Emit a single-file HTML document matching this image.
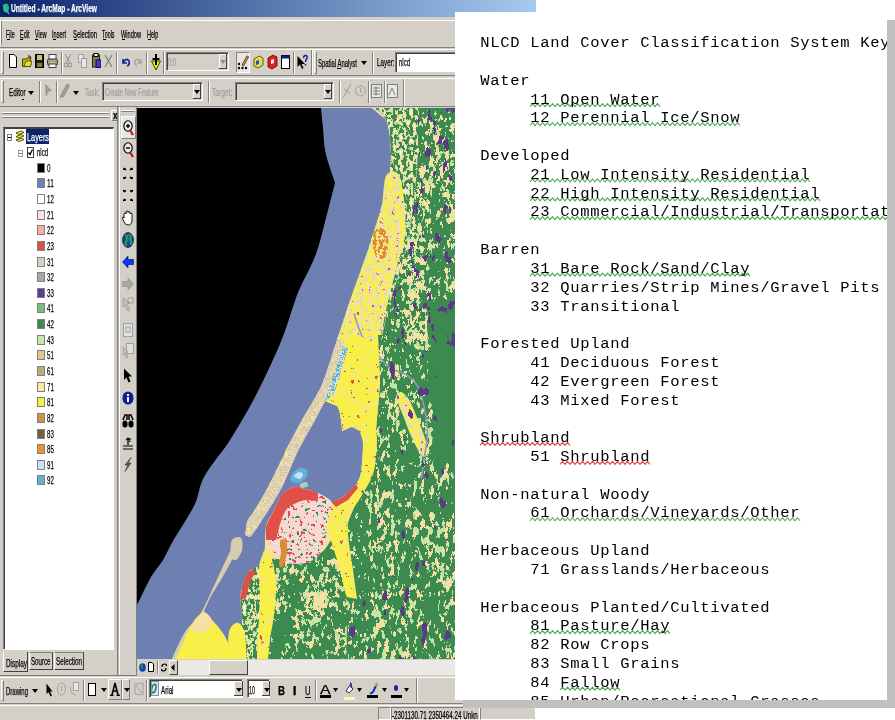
<!DOCTYPE html>
<html><head><meta charset="utf-8">
<style>
*{margin:0;padding:0;box-sizing:border-box}
html,body{width:895px;height:720px;overflow:hidden;background:#fff;position:relative;font-family:"Liberation Sans",sans-serif}
.a{position:absolute}
.t{white-space:nowrap;transform-origin:0 0;-webkit-text-stroke:0.25px currentColor}
#win{left:0;top:0;width:536px;height:720px;background:#d4d0c8;overflow:hidden}
#map{left:137px;top:108px;width:320px;height:551px;background:#000;overflow:hidden}
#doc{left:455px;top:12px;width:432px;height:688px;background:#fff;overflow:hidden;will-change:transform}
#shr{left:887px;top:20px;width:8px;height:688px;background:#c0c0c0}
#shb{left:463px;top:700px;width:432px;height:8px;background:#c0c0c0}
pre{font-family:"Liberation Mono",monospace;font-size:15.5px;letter-spacing:0.7px;line-height:18.82px;color:#000;position:absolute;left:25.3px;top:22.15px;white-space:pre}
</style></head><body>
<div id="win" class="a">
<div class="a" style="left:0px;top:0px;width:536px;height:17px;background:linear-gradient(to right,#0a246a 0%,#a6caf0 100%)"></div>
<svg class="a" style="left:1px;top:2px" width="10" height="14" viewBox="0 0 10 14" preserveAspectRatio="none"><ellipse cx="5" cy="7" rx="4.6" ry="6.2" fill="#0a1a50"/><ellipse cx="5" cy="6" rx="3" ry="4.5" fill="#20c060"/><path d="M2 3 L8 12" stroke="#40a0ff" stroke-width="1.5"/></svg>
<div class="a t" style="left:10.60px;top:3.29px;font-size:11px;line-height:11px;color:#fff;font-weight:bold;transform:scaleX(0.600);">Untitled - ArcMap - ArcView</div>
<div class="a" style="left:0px;top:20px;width:536px;height:1px;background:#fff"></div>
<div class="a" style="left:0px;top:21px;width:1px;height:24px;background:#ffffff"></div>
<div class="a" style="left:1px;top:21px;width:1px;height:24px;background:#808080"></div>
<div class="a t" style="left:6.30px;top:29.19px;font-size:11px;line-height:11px;color:#000;transform:scaleX(0.491);">File</div>
<div class="a" style="left:6.5px;top:39px;width:3px;height:1px;background:#000"></div>
<div class="a t" style="left:19.70px;top:29.19px;font-size:11px;line-height:11px;color:#000;transform:scaleX(0.501);">Edit</div>
<div class="a" style="left:19.5px;top:39px;width:3px;height:1px;background:#000"></div>
<div class="a t" style="left:34.90px;top:29.19px;font-size:11px;line-height:11px;color:#000;transform:scaleX(0.486);">View</div>
<div class="a" style="left:34.5px;top:39px;width:3px;height:1px;background:#000"></div>
<div class="a t" style="left:52.40px;top:29.19px;font-size:11px;line-height:11px;color:#000;transform:scaleX(0.509);">Insert</div>
<div class="a" style="left:52.5px;top:39px;width:3px;height:1px;background:#000"></div>
<div class="a t" style="left:73.30px;top:29.19px;font-size:11px;line-height:11px;color:#000;transform:scaleX(0.530);">Selection</div>
<div class="a" style="left:73.5px;top:39px;width:3px;height:1px;background:#000"></div>
<div class="a t" style="left:102.30px;top:29.19px;font-size:11px;line-height:11px;color:#000;transform:scaleX(0.487);">Tools</div>
<div class="a" style="left:102.5px;top:39px;width:3px;height:1px;background:#000"></div>
<div class="a t" style="left:121.10px;top:29.19px;font-size:11px;line-height:11px;color:#000;transform:scaleX(0.511);">Window</div>
<div class="a" style="left:121.5px;top:39px;width:3px;height:1px;background:#000"></div>
<div class="a t" style="left:147.00px;top:29.19px;font-size:11px;line-height:11px;color:#000;transform:scaleX(0.499);">Help</div>
<div class="a" style="left:147.5px;top:39px;width:3px;height:1px;background:#000"></div>
<div class="a" style="left:0px;top:47px;width:536px;height:1px;background:#808080"></div>
<div class="a" style="left:0px;top:49px;width:536px;height:1px;background:#ffffff"></div>
<div class="a" style="left:1px;top:51px;width:3px;height:23px;border-left:1px solid #ffffff;border-top:1px solid #ffffff;border-right:1px solid #808080;border-bottom:1px solid #808080"></div>
<svg class="a" style="left:9px;top:54px" width="8" height="14" viewBox="0 0 8 14" preserveAspectRatio="none"><path d="M0.5 0.5 H5 L7.5 3 V13.5 H0.5 Z" fill="#fff" stroke="#000"/></svg>
<svg class="a" style="left:22px;top:55px" width="10" height="12" viewBox="0 0 10 12" preserveAspectRatio="none"><path d="M0.5 4 H4 L5 3 H8.5 V11.5 H0.5 Z" fill="#c8b800" stroke="#404000"/><path d="M2 11.5 L4 6 H10 L8.5 11.5 Z" fill="#e8e040" stroke="#404000" stroke-width=".8"/><path d="M6 1 Q8 0 9 3" stroke="#000" fill="none"/></svg>
<svg class="a" style="left:35px;top:54px" width="9" height="14" viewBox="0 0 9 14" preserveAspectRatio="none"><rect x="0.5" y="0.5" width="8" height="13" fill="#202000" stroke="#000"/><rect x="2" y="1" width="5" height="5" fill="#c8c080"/><rect x="2" y="9" width="5" height="4" fill="#808040"/></svg>
<svg class="a" style="left:47px;top:54px" width="11" height="14" viewBox="0 0 11 14" preserveAspectRatio="none"><rect x="2" y="0.5" width="7" height="5" fill="#fff" stroke="#444"/><rect x="0.5" y="5" width="10" height="6" rx="1.5" fill="#a0a0a0" stroke="#333"/><rect x="2" y="10" width="7" height="3.5" fill="#fff" stroke="#444"/><rect x="3" y="8" width="5" height="1" fill="#e0d020"/></svg>
<div class="a" style="left:61px;top:52px;width:1px;height:22px;background:#808080"></div>
<div class="a" style="left:62px;top:52px;width:1px;height:22px;background:#ffffff"></div>
<svg class="a" style="left:64px;top:54px" width="8" height="14" viewBox="0 0 8 14" preserveAspectRatio="none"><path d="M1 0 L6 9 M7 0 L2 9" stroke="#909090" stroke-width="1"/><circle cx="2" cy="11" r="2" fill="none" stroke="#909090"/><circle cx="6" cy="11" r="2" fill="none" stroke="#909090"/></svg>
<svg class="a" style="left:78px;top:54px" width="9" height="14" viewBox="0 0 9 14" preserveAspectRatio="none"><rect x="0.5" y="0.5" width="5" height="8" fill="#e8e8e8" stroke="#a0a0a0"/><rect x="3.5" y="4.5" width="5" height="9" fill="#e8e8e8" stroke="#a0a0a0"/></svg>
<svg class="a" style="left:92px;top:53px" width="9" height="15" viewBox="0 0 9 15" preserveAspectRatio="none"><rect x="0.5" y="2" width="7" height="12" fill="#808040" stroke="#202000"/><rect x="2" y="0.5" width="4" height="3" fill="#fff" stroke="#000"/><rect x="4" y="7" width="5" height="7.5" fill="#4040c0" stroke="#000080"/></svg>
<svg class="a" style="left:104px;top:54px" width="9" height="14" viewBox="0 0 9 14" preserveAspectRatio="none"><path d="M1 1 L8 13 M8 1 L1 13" stroke="#808080" stroke-width="1.2"/></svg>
<div class="a" style="left:116px;top:52px;width:1px;height:22px;background:#808080"></div>
<div class="a" style="left:117px;top:52px;width:1px;height:22px;background:#ffffff"></div>
<svg class="a" style="left:121px;top:56px" width="9" height="11" viewBox="0 0 9 11" preserveAspectRatio="none"><path d="M2 3 L2 7 L6 7" fill="none" stroke="#1020a0" stroke-width="1.6"/><path d="M2 7 Q5 1 8 5 Q9 9 6 10" fill="none" stroke="#1020a0" stroke-width="1.6"/></svg>
<svg class="a" style="left:134px;top:56px" width="9" height="11" viewBox="0 0 9 11" preserveAspectRatio="none"><path d="M7 3 L7 7 L3 7" fill="none" stroke="#a0a0a0" stroke-width="1.4"/><path d="M7 7 Q4 1 1 5 Q0 9 3 10" fill="none" stroke="#a0a0a0" stroke-width="1.4"/></svg>
<div class="a" style="left:146px;top:52px;width:1px;height:22px;background:#808080"></div>
<div class="a" style="left:147px;top:52px;width:1px;height:22px;background:#ffffff"></div>
<svg class="a" style="left:151px;top:54px" width="10" height="17" viewBox="0 0 10 17" preserveAspectRatio="none"><path d="M0.5 7 H9.5 L5 16 Z" fill="#f0f000" stroke="#404000"/><path d="M5 0 V11 M1.5 5 H8.5" stroke="#000" stroke-width="2"/></svg>
<div class="a" style="left:163px;top:52px;width:1px;height:22px;background:#808080"></div>
<div class="a" style="left:164px;top:52px;width:1px;height:22px;background:#ffffff"></div>
<div class="a" style="left:166px;top:52px;width:63px;height:19px;background:#d4d0c8;border-top:1px solid #808080;border-left:1px solid #808080;border-right:1px solid #ffffff;border-bottom:1px solid #ffffff;box-shadow:inset 1px 1px 0 #404040,inset -1px -1px 0 #d4d0c8"></div>
<div class="a" style="left:219px;top:54px;width:8px;height:15px;background:#d4d0c8;border-top:1px solid #ffffff;border-left:1px solid #ffffff;border-right:1px solid #808080;border-bottom:1px solid #808080"></div>
<div class="a" style="left:219px;top:54px;width:8px;height:15px;box-shadow:inset -1px -1px 0 #404040"></div>
<svg class="a" style="left:220.0px;top:59.5px" width="6" height="4" viewBox="0 0 6 4" preserveAspectRatio="none"><path d="M0 0 L6 0 L3.0 4 Z" fill="#909090"/></svg>
<div class="a t" style="left:168.00px;top:56.69px;font-size:11px;line-height:11px;color:#a0a0a0;transform:scaleX(0.522);">0:0</div>
<div class="a" style="left:236px;top:52px;width:14px;height:21px;background:#e8e6e2;border-top:1px solid #808080;border-left:1px solid #808080;border-right:1px solid #ffffff;border-bottom:1px solid #ffffff"></div>
<svg class="a" style="left:237px;top:55px" width="12" height="15" viewBox="0 0 12 15" preserveAspectRatio="none"><path d="M5 10 L10 1 L11.5 2 L6.5 11 Z" fill="#e0c040" stroke="#000" stroke-width=".7"/><path d="M10 1 L11.5 2" stroke="#e02020" stroke-width="1.5"/><circle cx="2" cy="13" r="1.2" fill="#000"/><circle cx="5.5" cy="13" r="1.2" fill="#000"/><circle cx="9" cy="13" r="1.2" fill="#000"/><circle cx="2" cy="9" r="1.2" fill="#000"/></svg>
<svg class="a" style="left:253px;top:54px" width="11" height="16" viewBox="0 0 11 16" preserveAspectRatio="none"><path d="M1 5 L6 2 L10 4 L10 11 L5 14 L1 12 Z" fill="#e8e040" stroke="#404000" stroke-width=".8"/><path d="M3 7 L6 6 L6 10 L3 11 Z" fill="#2050c0"/></svg>
<svg class="a" style="left:267px;top:54px" width="11" height="16" viewBox="0 0 11 16" preserveAspectRatio="none"><path d="M1 4 L6 1 L10 3 L10 12 L5 15 L1 13 Z" fill="#e02020" stroke="#600000" stroke-width=".8"/><path d="M4 6 L7 5 L7 9 L4 10 Z" fill="#fff"/></svg>
<svg class="a" style="left:281px;top:55px" width="9" height="14" viewBox="0 0 9 14" preserveAspectRatio="none"><rect x="0.5" y="0.5" width="8" height="13" fill="#fff" stroke="#000"/><rect x="0.5" y="0.5" width="8" height="3" fill="#102080"/></svg>
<div class="a" style="left:293px;top:52px;width:1px;height:22px;background:#808080"></div>
<div class="a" style="left:294px;top:52px;width:1px;height:22px;background:#ffffff"></div>
<svg class="a" style="left:297px;top:54px" width="11" height="16" viewBox="0 0 11 16" preserveAspectRatio="none"><path d="M0.5 2 V13 L3 10.5 L5 15 L6.5 14 L4.5 10 H8 Z" fill="#000"/><path d="M6.5 4 Q7 1 9 1.5 Q11 2.5 9.5 5 Q8.5 6 8.5 8 M8.5 10 V11.5" fill="none" stroke="#1020a0" stroke-width="1.5"/></svg>
<div class="a" style="left:311px;top:50px;width:1px;height:26px;background:#808080"></div>
<div class="a" style="left:312px;top:50px;width:1px;height:26px;background:#ffffff"></div>
<div class="a" style="left:314px;top:51px;width:3px;height:23px;border-left:1px solid #ffffff;border-top:1px solid #ffffff;border-right:1px solid #808080;border-bottom:1px solid #808080"></div>
<div class="a t" style="left:318.00px;top:57.69px;font-size:11px;line-height:11px;color:#000;transform:scaleX(0.540);">Spatial Analyst</div>
<div class="a" style="left:337px;top:68px;width:4px;height:1px;background:#000"></div>
<svg class="a" style="left:360.8px;top:61px" width="6" height="4" viewBox="0 0 6 4" preserveAspectRatio="none"><path d="M0 0 L6 0 L3.0 4 Z" fill="#000"/></svg>
<div class="a" style="left:372px;top:52px;width:1px;height:22px;background:#808080"></div>
<div class="a" style="left:373px;top:52px;width:1px;height:22px;background:#ffffff"></div>
<div class="a t" style="left:376.90px;top:56.69px;font-size:11px;line-height:11px;color:#000;transform:scaleX(0.572);">Layer:</div>
<div class="a" style="left:395px;top:52px;width:62px;height:20px;background:#fff;border-top:1px solid #808080;border-left:1px solid #808080;box-shadow:inset 1px 1px 0 #404040"></div>
<div class="a t" style="left:399.00px;top:56.69px;font-size:11px;line-height:11px;color:#000;transform:scaleX(0.545);">nlcd</div>
<div class="a" style="left:0px;top:75px;width:536px;height:1px;background:#808080"></div>
<div class="a" style="left:0px;top:78px;width:536px;height:1px;background:#ffffff"></div>
<div class="a" style="left:1px;top:80px;width:3px;height:23px;border-left:1px solid #ffffff;border-top:1px solid #ffffff;border-right:1px solid #808080;border-bottom:1px solid #808080"></div>
<div class="a t" style="left:8.70px;top:86.99px;font-size:11px;line-height:11px;color:#000;transform:scaleX(0.574);">Editor</div>
<div class="a" style="left:22px;top:99px;width:2px;height:1px;background:#000"></div>
<svg class="a" style="left:28px;top:90.5px" width="6" height="4" viewBox="0 0 6 4" preserveAspectRatio="none"><path d="M0 0 L6 0 L3.0 4 Z" fill="#000"/></svg>
<div class="a" style="left:39px;top:81px;width:1px;height:22px;background:#808080"></div>
<div class="a" style="left:40px;top:81px;width:1px;height:22px;background:#ffffff"></div>
<svg class="a" style="left:45px;top:84px" width="7" height="13" viewBox="0 0 7 13" preserveAspectRatio="none"><path d="M0.5 0.5 L6.5 7 L3.5 7 L1 12 Z" fill="#a0a0a0" stroke="#808080" stroke-width=".5"/></svg>
<div class="a" style="left:56px;top:81px;width:1px;height:22px;background:#808080"></div>
<div class="a" style="left:57px;top:81px;width:1px;height:22px;background:#ffffff"></div>
<svg class="a" style="left:60px;top:83px" width="10" height="15" viewBox="0 0 10 15" preserveAspectRatio="none"><path d="M1 12 L7 1 L9.5 2.5 L3.5 13.5 L0.5 14.5 Z" fill="#a0a0a0" stroke="#707070" stroke-width=".6"/></svg>
<svg class="a" style="left:73px;top:90.5px" width="6" height="4" viewBox="0 0 6 4" preserveAspectRatio="none"><path d="M0 0 L6 0 L3.0 4 Z" fill="#000"/></svg>
<div class="a t" style="left:85.00px;top:86.99px;font-size:11px;line-height:11px;color:#a0a0a0;transform:scaleX(0.564);">Task:</div>
<div class="a" style="left:102px;top:82px;width:101px;height:19px;background:#d4d0c8;border-top:1px solid #808080;border-left:1px solid #808080;border-right:1px solid #ffffff;border-bottom:1px solid #ffffff;box-shadow:inset 1px 1px 0 #404040,inset -1px -1px 0 #d4d0c8"></div>
<div class="a" style="left:193px;top:84px;width:8px;height:15px;background:#d4d0c8;border-top:1px solid #ffffff;border-left:1px solid #ffffff;border-right:1px solid #808080;border-bottom:1px solid #808080"></div>
<div class="a" style="left:193px;top:84px;width:8px;height:15px;box-shadow:inset -1px -1px 0 #404040"></div>
<svg class="a" style="left:194.0px;top:89.5px" width="6" height="4" viewBox="0 0 6 4" preserveAspectRatio="none"><path d="M0 0 L6 0 L3.0 4 Z" fill="#000"/></svg>
<div class="a t" style="left:104.90px;top:86.99px;font-size:11px;line-height:11px;color:#a0a0a0;transform:scaleX(0.540);">Create New Feature</div>
<div class="a" style="left:208px;top:81px;width:1px;height:22px;background:#808080"></div>
<div class="a" style="left:209px;top:81px;width:1px;height:22px;background:#ffffff"></div>
<div class="a t" style="left:212.40px;top:86.99px;font-size:11px;line-height:11px;color:#a0a0a0;transform:scaleX(0.609);">Target:</div>
<div class="a" style="left:235px;top:82px;width:99px;height:19px;background:#d4d0c8;border-top:1px solid #808080;border-left:1px solid #808080;border-right:1px solid #ffffff;border-bottom:1px solid #ffffff;box-shadow:inset 1px 1px 0 #404040,inset -1px -1px 0 #d4d0c8"></div>
<div class="a" style="left:324px;top:84px;width:8px;height:15px;background:#d4d0c8;border-top:1px solid #ffffff;border-left:1px solid #ffffff;border-right:1px solid #808080;border-bottom:1px solid #808080"></div>
<div class="a" style="left:324px;top:84px;width:8px;height:15px;box-shadow:inset -1px -1px 0 #404040"></div>
<svg class="a" style="left:325.0px;top:89.5px" width="6" height="4" viewBox="0 0 6 4" preserveAspectRatio="none"><path d="M0 0 L6 0 L3.0 4 Z" fill="#000"/></svg>
<div class="a" style="left:339px;top:81px;width:1px;height:22px;background:#808080"></div>
<div class="a" style="left:340px;top:81px;width:1px;height:22px;background:#ffffff"></div>
<svg class="a" style="left:342px;top:83px" width="10" height="16" viewBox="0 0 10 16" preserveAspectRatio="none"><path d="M9 1 L1 15 M2 6 L8 10" stroke="#a0a0a0" stroke-width="1"/></svg>
<svg class="a" style="left:355px;top:83px" width="11" height="16" viewBox="0 0 11 16" preserveAspectRatio="none"><circle cx="5.5" cy="8" r="5" fill="none" stroke="#a0a0a0"/><path d="M5.5 5 V9 L7 10" stroke="#a0a0a0" fill="none"/></svg>
<div class="a" style="left:368px;top:81px;width:1px;height:22px;background:#808080"></div>
<div class="a" style="left:369px;top:81px;width:1px;height:22px;background:#ffffff"></div>
<svg class="a" style="left:371px;top:84px" width="11" height="14" viewBox="0 0 11 14" preserveAspectRatio="none"><rect x="0.5" y="0.5" width="10" height="13" fill="#e8e8e8" stroke="#808080"/><path d="M2 4 H9 M2 7 H9 M2 10 H9 M5 2 V12" stroke="#808080"/></svg>
<div class="a" style="left:384px;top:81px;width:1px;height:22px;background:#808080"></div>
<div class="a" style="left:385px;top:81px;width:1px;height:22px;background:#ffffff"></div>
<svg class="a" style="left:387px;top:84px" width="11" height="14" viewBox="0 0 11 14" preserveAspectRatio="none"><rect x="0.5" y="0.5" width="10" height="13" fill="#e8e8e8" stroke="#808080"/><path d="M2 11 L5 4 L8 11" stroke="#808080" fill="none"/></svg>
<div class="a" style="left:403px;top:79px;width:1px;height:27px;background:#808080"></div>
<div class="a" style="left:404px;top:79px;width:1px;height:27px;background:#ffffff"></div>
<div class="a" style="left:0px;top:106px;width:536px;height:1px;background:#808080"></div>
<div id="map" class="a"><svg width="320" height="551" viewBox="137 108 320 551" style="position:absolute;left:0;top:0;display:block"><defs><filter id="fUR_lg" color-interpolation-filters="sRGB" x="137" y="108" width="320" height="<class '__main__.H'>" filterUnits="userSpaceOnUse"><feTurbulence type="fractalNoise" baseFrequency="0.24 0.14" numOctaves="4" seed="4" result="fUR_lgh0"/><feColorMatrix in="fUR_lgh0" type="matrix" values="1 0 0 0 0 1 0 0 0 0 1 0 0 0 0 0 0 0 0 1" result="fUR_lgh"/><feTurbulence type="fractalNoise" baseFrequency="0.035 0.025" numOctaves="2" seed="5" result="fUR_lgl0"/><feColorMatrix in="fUR_lgl0" type="matrix" values="1 0 0 0 0 1 0 0 0 0 1 0 0 0 0 0 0 0 0 1" result="fUR_lgl"/><feComposite in="fUR_lgh" in2="fUR_lgl" operator="arithmetic" k1="0" k2="0.700" k3="0.300" k4="0" result="fUR_lgg"/><feColorMatrix in="fUR_lgg" type="matrix" values="1 0 0 0 0 1 0 0 0 0 1 0 0 0 0 1 0 0 0 0" result="fUR_lgga"/><feComponentTransfer in="fUR_lgga"><feFuncR type="discrete" tableValues="0 0 0 0 0 0 0 0 0 0 0 0 0 0 0 0 0 0 0 0 0 0 0 0 0 0 0 0 0 0 0 0 0 0 0 0 0 0 0 0 0 0 0 0 0 0 0 0 0 0 0 0 0 0 0 0 0 0 0 0 0 0 0 0 0 0 0 0 0 0 0 0 0 0 0 0.784 0.784 0.784 0.784 0.784 0.784 0.784 0.784 0.784 0.784 0.784 0.784 0.784 0.784 0.784 0.784 0.784 0.784 0.784 0.784 0.784 0.784 0.784 0.784 0.784 0.784 0.784 0.784 0.784 0.784 0.784 0.784 0.784 0.784 0.784 0.784 0.784 0.784 0.784 0.784 0.784 0.784 0.784 0.784 0.784 0.784 0.784 0.784 0.784 0.784 0.784 0.784 0.784"/><feFuncG type="discrete" tableValues="0 0 0 0 0 0 0 0 0 0 0 0 0 0 0 0 0 0 0 0 0 0 0 0 0 0 0 0 0 0 0 0 0 0 0 0 0 0 0 0 0 0 0 0 0 0 0 0 0 0 0 0 0 0 0 0 0 0 0 0 0 0 0 0 0 0 0 0 0 0 0 0 0 0 0 0.894 0.894 0.894 0.894 0.894 0.894 0.894 0.894 0.894 0.894 0.894 0.894 0.894 0.894 0.894 0.894 0.894 0.894 0.894 0.894 0.894 0.894 0.894 0.894 0.894 0.894 0.894 0.894 0.894 0.894 0.894 0.894 0.894 0.894 0.894 0.894 0.894 0.894 0.894 0.894 0.894 0.894 0.894 0.894 0.894 0.894 0.894 0.894 0.894 0.894 0.894 0.894 0.894"/><feFuncB type="discrete" tableValues="0 0 0 0 0 0 0 0 0 0 0 0 0 0 0 0 0 0 0 0 0 0 0 0 0 0 0 0 0 0 0 0 0 0 0 0 0 0 0 0 0 0 0 0 0 0 0 0 0 0 0 0 0 0 0 0 0 0 0 0 0 0 0 0 0 0 0 0 0 0 0 0 0 0 0 0.643 0.643 0.643 0.643 0.643 0.643 0.643 0.643 0.643 0.643 0.643 0.643 0.643 0.643 0.643 0.643 0.643 0.643 0.643 0.643 0.643 0.643 0.643 0.643 0.643 0.643 0.643 0.643 0.643 0.643 0.643 0.643 0.643 0.643 0.643 0.643 0.643 0.643 0.643 0.643 0.643 0.643 0.643 0.643 0.643 0.643 0.643 0.643 0.643 0.643 0.643 0.643 0.643"/><feFuncA type="discrete" tableValues="0 0 0 0 0 0 0 0 0 0 0 0 0 0 0 0 0 0 0 0 0 0 0 0 0 0 0 0 0 0 0 0 0 0 0 0 0 0 0 0 0 0 0 0 0 0 0 0 0 0 0 0 0 0 0 0 0 0 0 0 0 0 0 0 0 0 0 0 0 0 0 0 0 0 0 1 1 1 1 1 1 1 1 1 1 1 1 1 1 1 1 1 1 1 1 1 1 1 1 1 1 1 1 1 1 1 1 1 1 1 1 1 1 1 1 1 1 1 1 1 1 1 1 1 1 1 1 1"/></feComponentTransfer></filter><filter id="fUR_bg" color-interpolation-filters="sRGB" x="137" y="108" width="320" height="<class '__main__.H'>" filterUnits="userSpaceOnUse"><feTurbulence type="fractalNoise" baseFrequency="0.2 0.12" numOctaves="4" seed="8" result="fUR_bgh0"/><feColorMatrix in="fUR_bgh0" type="matrix" values="1 0 0 0 0 1 0 0 0 0 1 0 0 0 0 0 0 0 0 1" result="fUR_bgh"/><feTurbulence type="fractalNoise" baseFrequency="0.035 0.025" numOctaves="2" seed="5" result="fUR_bgl0"/><feColorMatrix in="fUR_bgl0" type="matrix" values="1 0 0 0 0 1 0 0 0 0 1 0 0 0 0 0 0 0 0 1" result="fUR_bgl"/><feComposite in="fUR_bgh" in2="fUR_bgl" operator="arithmetic" k1="0" k2="0.700" k3="0.300" k4="0" result="fUR_bgg"/><feColorMatrix in="fUR_bgg" type="matrix" values="1 0 0 0 0 1 0 0 0 0 1 0 0 0 0 1 0 0 0 0" result="fUR_bgga"/><feComponentTransfer in="fUR_bgga"><feFuncR type="discrete" tableValues="0 0 0 0 0 0 0 0 0 0 0 0 0 0 0 0 0 0 0 0 0 0 0 0 0 0 0 0 0 0 0 0 0 0 0 0 0 0 0 0 0 0 0 0 0 0 0 0 0 0 0 0 0 0 0 0 0 0 0 0 0 0 0 0 0 0 0 0 0 0 0 0 0 0 0.965 0.965 0.965 0.965 0.965 0.965 0.965 0.965 0.965 0.965 0.965 0.965 0.965 0.965 0.965 0.965 0.965 0.965 0.965 0.965 0.965 0.965 0.965 0.965 0.965 0.965 0.965 0.965 0.965 0.965 0.965 0.965 0.965 0.965 0.965 0.965 0.965 0.965 0.965 0.965 0.965 0.965 0.965 0.965 0.965 0.965 0.965 0.965 0.965 0.965 0.965 0.965 0.965 0.965"/><feFuncG type="discrete" tableValues="0 0 0 0 0 0 0 0 0 0 0 0 0 0 0 0 0 0 0 0 0 0 0 0 0 0 0 0 0 0 0 0 0 0 0 0 0 0 0 0 0 0 0 0 0 0 0 0 0 0 0 0 0 0 0 0 0 0 0 0 0 0 0 0 0 0 0 0 0 0 0 0 0 0 0.878 0.878 0.878 0.878 0.878 0.878 0.878 0.878 0.878 0.878 0.878 0.878 0.878 0.878 0.878 0.878 0.878 0.878 0.878 0.878 0.878 0.878 0.878 0.878 0.878 0.878 0.878 0.878 0.878 0.878 0.878 0.878 0.878 0.878 0.878 0.878 0.878 0.878 0.878 0.878 0.878 0.878 0.878 0.878 0.878 0.878 0.878 0.878 0.878 0.878 0.878 0.878 0.878 0.878"/><feFuncB type="discrete" tableValues="0 0 0 0 0 0 0 0 0 0 0 0 0 0 0 0 0 0 0 0 0 0 0 0 0 0 0 0 0 0 0 0 0 0 0 0 0 0 0 0 0 0 0 0 0 0 0 0 0 0 0 0 0 0 0 0 0 0 0 0 0 0 0 0 0 0 0 0 0 0 0 0 0 0 0.643 0.643 0.643 0.643 0.643 0.643 0.643 0.643 0.643 0.643 0.643 0.643 0.643 0.643 0.643 0.643 0.643 0.643 0.643 0.643 0.643 0.643 0.643 0.643 0.643 0.643 0.643 0.643 0.643 0.643 0.643 0.643 0.643 0.643 0.643 0.643 0.643 0.643 0.643 0.643 0.643 0.643 0.643 0.643 0.643 0.643 0.643 0.643 0.643 0.643 0.643 0.643 0.643 0.643"/><feFuncA type="discrete" tableValues="0 0 0 0 0 0 0 0 0 0 0 0 0 0 0 0 0 0 0 0 0 0 0 0 0 0 0 0 0 0 0 0 0 0 0 0 0 0 0 0 0 0 0 0 0 0 0 0 0 0 0 0 0 0 0 0 0 0 0 0 0 0 0 0 0 0 0 0 0 0 0 0 0 0 1 1 1 1 1 1 1 1 1 1 1 1 1 1 1 1 1 1 1 1 1 1 1 1 1 1 1 1 1 1 1 1 1 1 1 1 1 1 1 1 1 1 1 1 1 1 1 1 1 1 1 1 1 1"/></feComponentTransfer></filter><filter id="fLR_lg" color-interpolation-filters="sRGB" x="137" y="108" width="320" height="<class '__main__.H'>" filterUnits="userSpaceOnUse"><feTurbulence type="fractalNoise" baseFrequency="0.22 0.11" numOctaves="4" seed="14" result="fLR_lgh0"/><feColorMatrix in="fLR_lgh0" type="matrix" values="1 0 0 0 0 1 0 0 0 0 1 0 0 0 0 0 0 0 0 1" result="fLR_lgh"/><feTurbulence type="fractalNoise" baseFrequency="0.04 0.025" numOctaves="2" seed="15" result="fLR_lgl0"/><feColorMatrix in="fLR_lgl0" type="matrix" values="1 0 0 0 0 1 0 0 0 0 1 0 0 0 0 0 0 0 0 1" result="fLR_lgl"/><feComposite in="fLR_lgh" in2="fLR_lgl" operator="arithmetic" k1="0" k2="0.700" k3="0.300" k4="0" result="fLR_lgg"/><feColorMatrix in="fLR_lgg" type="matrix" values="1 0 0 0 0 1 0 0 0 0 1 0 0 0 0 1 0 0 0 0" result="fLR_lgga"/><feComponentTransfer in="fLR_lgga"><feFuncR type="discrete" tableValues="0 0 0 0 0 0 0 0 0 0 0 0 0 0 0 0 0 0 0 0 0 0 0 0 0 0 0 0 0 0 0 0 0 0 0 0 0 0 0 0 0 0 0 0 0 0 0 0 0 0 0 0 0 0 0 0 0 0 0 0 0 0 0 0 0 0 0 0 0 0 0 0 0 0 0 0 0.784 0.784 0.784 0.784 0.784 0.784 0.784 0.784 0.784 0.784 0.784 0.784 0.784 0.784 0.784 0.784 0.784 0.784 0.784 0.784 0.784 0.784 0.784 0.784 0.784 0.784 0.784 0.784 0.784 0.784 0.784 0.784 0.784 0.784 0.784 0.784 0.784 0.784 0.784 0.784 0.784 0.784 0.784 0.784 0.784 0.784 0.784 0.784 0.784 0.784 0.784 0.784"/><feFuncG type="discrete" tableValues="0 0 0 0 0 0 0 0 0 0 0 0 0 0 0 0 0 0 0 0 0 0 0 0 0 0 0 0 0 0 0 0 0 0 0 0 0 0 0 0 0 0 0 0 0 0 0 0 0 0 0 0 0 0 0 0 0 0 0 0 0 0 0 0 0 0 0 0 0 0 0 0 0 0 0 0 0.894 0.894 0.894 0.894 0.894 0.894 0.894 0.894 0.894 0.894 0.894 0.894 0.894 0.894 0.894 0.894 0.894 0.894 0.894 0.894 0.894 0.894 0.894 0.894 0.894 0.894 0.894 0.894 0.894 0.894 0.894 0.894 0.894 0.894 0.894 0.894 0.894 0.894 0.894 0.894 0.894 0.894 0.894 0.894 0.894 0.894 0.894 0.894 0.894 0.894 0.894 0.894"/><feFuncB type="discrete" tableValues="0 0 0 0 0 0 0 0 0 0 0 0 0 0 0 0 0 0 0 0 0 0 0 0 0 0 0 0 0 0 0 0 0 0 0 0 0 0 0 0 0 0 0 0 0 0 0 0 0 0 0 0 0 0 0 0 0 0 0 0 0 0 0 0 0 0 0 0 0 0 0 0 0 0 0 0 0.643 0.643 0.643 0.643 0.643 0.643 0.643 0.643 0.643 0.643 0.643 0.643 0.643 0.643 0.643 0.643 0.643 0.643 0.643 0.643 0.643 0.643 0.643 0.643 0.643 0.643 0.643 0.643 0.643 0.643 0.643 0.643 0.643 0.643 0.643 0.643 0.643 0.643 0.643 0.643 0.643 0.643 0.643 0.643 0.643 0.643 0.643 0.643 0.643 0.643 0.643 0.643"/><feFuncA type="discrete" tableValues="0 0 0 0 0 0 0 0 0 0 0 0 0 0 0 0 0 0 0 0 0 0 0 0 0 0 0 0 0 0 0 0 0 0 0 0 0 0 0 0 0 0 0 0 0 0 0 0 0 0 0 0 0 0 0 0 0 0 0 0 0 0 0 0 0 0 0 0 0 0 0 0 0 0 0 0 1 1 1 1 1 1 1 1 1 1 1 1 1 1 1 1 1 1 1 1 1 1 1 1 1 1 1 1 1 1 1 1 1 1 1 1 1 1 1 1 1 1 1 1 1 1 1 1 1 1 1 1"/></feComponentTransfer></filter><filter id="fLR_bg" color-interpolation-filters="sRGB" x="137" y="108" width="320" height="<class '__main__.H'>" filterUnits="userSpaceOnUse"><feTurbulence type="fractalNoise" baseFrequency="0.2 0.1" numOctaves="4" seed="18" result="fLR_bgh0"/><feColorMatrix in="fLR_bgh0" type="matrix" values="1 0 0 0 0 1 0 0 0 0 1 0 0 0 0 0 0 0 0 1" result="fLR_bgh"/><feTurbulence type="fractalNoise" baseFrequency="0.04 0.025" numOctaves="2" seed="15" result="fLR_bgl0"/><feColorMatrix in="fLR_bgl0" type="matrix" values="1 0 0 0 0 1 0 0 0 0 1 0 0 0 0 0 0 0 0 1" result="fLR_bgl"/><feComposite in="fLR_bgh" in2="fLR_bgl" operator="arithmetic" k1="0" k2="0.700" k3="0.300" k4="0" result="fLR_bgg"/><feColorMatrix in="fLR_bgg" type="matrix" values="1 0 0 0 0 1 0 0 0 0 1 0 0 0 0 1 0 0 0 0" result="fLR_bgga"/><feComponentTransfer in="fLR_bgga"><feFuncR type="discrete" tableValues="0 0 0 0 0 0 0 0 0 0 0 0 0 0 0 0 0 0 0 0 0 0 0 0 0 0 0 0 0 0 0 0 0 0 0 0 0 0 0 0 0 0 0 0 0 0 0 0 0 0 0 0 0 0 0 0 0 0 0 0 0 0 0 0 0 0 0 0 0 0 0 0 0 0 0 0 0 0 0.965 0.965 0.965 0.965 0.965 0.965 0.965 0.965 0.965 0.965 0.965 0.965 0.965 0.965 0.965 0.965 0.965 0.965 0.965 0.965 0.965 0.965 0.965 0.965 0.965 0.965 0.965 0.965 0.965 0.965 0.965 0.965 0.965 0.965 0.965 0.965 0.965 0.965 0.965 0.965 0.965 0.965 0.965 0.965 0.965 0.965 0.965 0.965 0.965 0.965"/><feFuncG type="discrete" tableValues="0 0 0 0 0 0 0 0 0 0 0 0 0 0 0 0 0 0 0 0 0 0 0 0 0 0 0 0 0 0 0 0 0 0 0 0 0 0 0 0 0 0 0 0 0 0 0 0 0 0 0 0 0 0 0 0 0 0 0 0 0 0 0 0 0 0 0 0 0 0 0 0 0 0 0 0 0 0 0.878 0.878 0.878 0.878 0.878 0.878 0.878 0.878 0.878 0.878 0.878 0.878 0.878 0.878 0.878 0.878 0.878 0.878 0.878 0.878 0.878 0.878 0.878 0.878 0.878 0.878 0.878 0.878 0.878 0.878 0.878 0.878 0.878 0.878 0.878 0.878 0.878 0.878 0.878 0.878 0.878 0.878 0.878 0.878 0.878 0.878 0.878 0.878 0.878 0.878"/><feFuncB type="discrete" tableValues="0 0 0 0 0 0 0 0 0 0 0 0 0 0 0 0 0 0 0 0 0 0 0 0 0 0 0 0 0 0 0 0 0 0 0 0 0 0 0 0 0 0 0 0 0 0 0 0 0 0 0 0 0 0 0 0 0 0 0 0 0 0 0 0 0 0 0 0 0 0 0 0 0 0 0 0 0 0 0.643 0.643 0.643 0.643 0.643 0.643 0.643 0.643 0.643 0.643 0.643 0.643 0.643 0.643 0.643 0.643 0.643 0.643 0.643 0.643 0.643 0.643 0.643 0.643 0.643 0.643 0.643 0.643 0.643 0.643 0.643 0.643 0.643 0.643 0.643 0.643 0.643 0.643 0.643 0.643 0.643 0.643 0.643 0.643 0.643 0.643 0.643 0.643 0.643 0.643"/><feFuncA type="discrete" tableValues="0 0 0 0 0 0 0 0 0 0 0 0 0 0 0 0 0 0 0 0 0 0 0 0 0 0 0 0 0 0 0 0 0 0 0 0 0 0 0 0 0 0 0 0 0 0 0 0 0 0 0 0 0 0 0 0 0 0 0 0 0 0 0 0 0 0 0 0 0 0 0 0 0 0 0 0 0 0 1 1 1 1 1 1 1 1 1 1 1 1 1 1 1 1 1 1 1 1 1 1 1 1 1 1 1 1 1 1 1 1 1 1 1 1 1 1 1 1 1 1 1 1 1 1 1 1 1 1"/></feComponentTransfer></filter><filter id="fPu" color-interpolation-filters="sRGB" x="137" y="108" width="320" height="<class '__main__.H'>" filterUnits="userSpaceOnUse"><feTurbulence type="fractalNoise" baseFrequency="0.1 0.045" numOctaves="2" seed="21" result="fPuh0"/><feColorMatrix in="fPuh0" type="matrix" values="1 0 0 0 0 1 0 0 0 0 1 0 0 0 0 0 0 0 0 1" result="fPuh"/><feColorMatrix in="fPuh" type="matrix" values="1 0 0 0 0 0 1 0 0 0 0 0 1 0 0 0 0 0 0 1" result="fPug"/><feColorMatrix in="fPug" type="matrix" values="1 0 0 0 0 1 0 0 0 0 1 0 0 0 0 1 0 0 0 0" result="fPuga"/><feComponentTransfer in="fPuga"><feFuncR type="discrete" tableValues="0 0 0 0 0 0 0 0 0 0 0 0 0 0 0 0 0 0 0 0 0 0 0 0 0 0 0 0 0 0 0 0 0 0 0 0 0 0 0 0 0 0 0 0 0 0 0 0 0 0 0 0 0 0 0 0 0 0 0 0 0 0 0 0 0 0 0 0 0 0 0 0 0 0 0 0 0 0 0 0 0 0 0 0 0 0 0 0 0 0 0 0 0.353 0.353 0.353 0.353 0.353 0.353 0.353 0.353 0.353 0.353 0.353 0.353 0.353 0.353 0.353 0.353 0.353 0.353 0.353 0.353 0.353 0.353 0.353 0.353 0.353 0.353 0.353 0.353 0.353 0.353 0.353 0.353 0.353 0.353 0.353 0.353"/><feFuncG type="discrete" tableValues="0 0 0 0 0 0 0 0 0 0 0 0 0 0 0 0 0 0 0 0 0 0 0 0 0 0 0 0 0 0 0 0 0 0 0 0 0 0 0 0 0 0 0 0 0 0 0 0 0 0 0 0 0 0 0 0 0 0 0 0 0 0 0 0 0 0 0 0 0 0 0 0 0 0 0 0 0 0 0 0 0 0 0 0 0 0 0 0 0 0 0 0 0.227 0.227 0.227 0.227 0.227 0.227 0.227 0.227 0.227 0.227 0.227 0.227 0.227 0.227 0.227 0.227 0.227 0.227 0.227 0.227 0.227 0.227 0.227 0.227 0.227 0.227 0.227 0.227 0.227 0.227 0.227 0.227 0.227 0.227 0.227 0.227"/><feFuncB type="discrete" tableValues="0 0 0 0 0 0 0 0 0 0 0 0 0 0 0 0 0 0 0 0 0 0 0 0 0 0 0 0 0 0 0 0 0 0 0 0 0 0 0 0 0 0 0 0 0 0 0 0 0 0 0 0 0 0 0 0 0 0 0 0 0 0 0 0 0 0 0 0 0 0 0 0 0 0 0 0 0 0 0 0 0 0 0 0 0 0 0 0 0 0 0 0 0.541 0.541 0.541 0.541 0.541 0.541 0.541 0.541 0.541 0.541 0.541 0.541 0.541 0.541 0.541 0.541 0.541 0.541 0.541 0.541 0.541 0.541 0.541 0.541 0.541 0.541 0.541 0.541 0.541 0.541 0.541 0.541 0.541 0.541 0.541 0.541"/><feFuncA type="discrete" tableValues="0 0 0 0 0 0 0 0 0 0 0 0 0 0 0 0 0 0 0 0 0 0 0 0 0 0 0 0 0 0 0 0 0 0 0 0 0 0 0 0 0 0 0 0 0 0 0 0 0 0 0 0 0 0 0 0 0 0 0 0 0 0 0 0 0 0 0 0 0 0 0 0 0 0 0 0 0 0 0 0 0 0 0 0 0 0 0 0 0 0 0 0 1 1 1 1 1 1 1 1 1 1 1 1 1 1 1 1 1 1 1 1 1 1 1 1 1 1 1 1 1 1 1 1 1 1 1 1"/></feComponentTransfer></filter><filter id="fPu2" color-interpolation-filters="sRGB" x="137" y="108" width="320" height="<class '__main__.H'>" filterUnits="userSpaceOnUse"><feTurbulence type="fractalNoise" baseFrequency="0.12 0.06" numOctaves="3" seed="23" result="fPu2h0"/><feColorMatrix in="fPu2h0" type="matrix" values="1 0 0 0 0 1 0 0 0 0 1 0 0 0 0 0 0 0 0 1" result="fPu2h"/><feColorMatrix in="fPu2h" type="matrix" values="1 0 0 0 0 0 1 0 0 0 0 0 1 0 0 0 0 0 0 1" result="fPu2g"/><feColorMatrix in="fPu2g" type="matrix" values="1 0 0 0 0 1 0 0 0 0 1 0 0 0 0 1 0 0 0 0" result="fPu2ga"/><feComponentTransfer in="fPu2ga"><feFuncR type="discrete" tableValues="0 0 0 0 0 0 0 0 0 0 0 0 0 0 0 0 0 0 0 0 0 0 0 0 0 0 0 0 0 0 0 0 0 0 0 0 0 0 0 0 0 0 0 0 0 0 0 0 0 0 0 0 0 0 0 0 0 0 0 0 0 0 0 0 0 0 0 0 0 0 0 0 0 0 0 0 0 0 0 0 0 0 0 0 0 0 0.353 0.353 0.353 0.353 0.353 0.353 0.353 0.353 0.353 0.353 0.353 0.353 0.353 0.353 0.353 0.353 0.353 0.353 0.353 0.353 0.353 0.353 0.353 0.353 0.353 0.353 0.353 0.353 0.353 0.353 0.353 0.353 0.353 0.353 0.353 0.353 0.353 0.353 0.353 0.353 0.353 0.353"/><feFuncG type="discrete" tableValues="0 0 0 0 0 0 0 0 0 0 0 0 0 0 0 0 0 0 0 0 0 0 0 0 0 0 0 0 0 0 0 0 0 0 0 0 0 0 0 0 0 0 0 0 0 0 0 0 0 0 0 0 0 0 0 0 0 0 0 0 0 0 0 0 0 0 0 0 0 0 0 0 0 0 0 0 0 0 0 0 0 0 0 0 0 0 0.227 0.227 0.227 0.227 0.227 0.227 0.227 0.227 0.227 0.227 0.227 0.227 0.227 0.227 0.227 0.227 0.227 0.227 0.227 0.227 0.227 0.227 0.227 0.227 0.227 0.227 0.227 0.227 0.227 0.227 0.227 0.227 0.227 0.227 0.227 0.227 0.227 0.227 0.227 0.227 0.227 0.227"/><feFuncB type="discrete" tableValues="0 0 0 0 0 0 0 0 0 0 0 0 0 0 0 0 0 0 0 0 0 0 0 0 0 0 0 0 0 0 0 0 0 0 0 0 0 0 0 0 0 0 0 0 0 0 0 0 0 0 0 0 0 0 0 0 0 0 0 0 0 0 0 0 0 0 0 0 0 0 0 0 0 0 0 0 0 0 0 0 0 0 0 0 0 0 0.541 0.541 0.541 0.541 0.541 0.541 0.541 0.541 0.541 0.541 0.541 0.541 0.541 0.541 0.541 0.541 0.541 0.541 0.541 0.541 0.541 0.541 0.541 0.541 0.541 0.541 0.541 0.541 0.541 0.541 0.541 0.541 0.541 0.541 0.541 0.541 0.541 0.541 0.541 0.541 0.541 0.541"/><feFuncA type="discrete" tableValues="0 0 0 0 0 0 0 0 0 0 0 0 0 0 0 0 0 0 0 0 0 0 0 0 0 0 0 0 0 0 0 0 0 0 0 0 0 0 0 0 0 0 0 0 0 0 0 0 0 0 0 0 0 0 0 0 0 0 0 0 0 0 0 0 0 0 0 0 0 0 0 0 0 0 0 0 0 0 0 0 0 0 0 0 0 0 1 1 1 1 1 1 1 1 1 1 1 1 1 1 1 1 1 1 1 1 1 1 1 1 1 1 1 1 1 1 1 1 1 1 1 1 1 1 1 1 1 1"/></feComponentTransfer></filter><filter id="fYel" color-interpolation-filters="sRGB" x="137" y="108" width="320" height="<class '__main__.H'>" filterUnits="userSpaceOnUse"><feTurbulence type="fractalNoise" baseFrequency="0.2" numOctaves="3" seed="31" result="fYelh0"/><feColorMatrix in="fYelh0" type="matrix" values="1 0 0 0 0 1 0 0 0 0 1 0 0 0 0 0 0 0 0 1" result="fYelh"/><feColorMatrix in="fYelh" type="matrix" values="1 0 0 0 0 0 1 0 0 0 0 0 1 0 0 0 0 0 0 1" result="fYelg"/><feColorMatrix in="fYelg" type="matrix" values="1 0 0 0 0 1 0 0 0 0 1 0 0 0 0 1 0 0 0 0" result="fYelga"/><feComponentTransfer in="fYelga"><feFuncR type="discrete" tableValues="0.965 0.965 0.965 0.965 0.965 0.965 0.965 0.965 0.965 0.965 0.965 0.965 0.965 0.965 0.965 0.965 0.965 0.965 0.965 0.965 0.965 0.965 0.965 0.965 0.965 0.965 0.965 0.965 0.965 0.965 0.965 0.965 0.965 0.965 0.965 0.965 0.965 0.965 0.965 0.965 0.965 0.965 0.973 0.973 0.973 0.973 0.973 0.973 0.973 0.973 0.973 0.973 0.973 0.973 0.973 0.973 0.973 0.973 0.973 0.973 0.973 0.973 0.973 0.973 0.973 0.973 0.973 0.973 0.973 0.973 0.973 0.973 0.973 0.973 0.973 0.973 0.973 0.973 0.973 0.973 0.973 0.973 0.973 0.973 0.973 0.973 0.973 0.973 0.973 0.784 0.784 0.784 0.784 0.784 0.784 0.878 0.878 0.878 0.878 0.878 0.878 0.878 0.878 0.878 0.878 0.878 0.878 0.878 0.878 0.878 0.878 0.878 0.878 0.878 0.878 0.878 0.878 0.878 0.878 0.878 0.878 0.878 0.878 0.878 0.878 0.878 0.878 0.878"/><feFuncG type="discrete" tableValues="0.878 0.878 0.878 0.878 0.878 0.878 0.878 0.878 0.878 0.878 0.878 0.878 0.878 0.878 0.878 0.878 0.878 0.878 0.878 0.878 0.878 0.878 0.878 0.878 0.878 0.878 0.878 0.878 0.878 0.878 0.878 0.878 0.878 0.878 0.878 0.878 0.878 0.878 0.878 0.878 0.878 0.878 0.941 0.941 0.941 0.941 0.941 0.941 0.941 0.941 0.941 0.941 0.941 0.941 0.941 0.941 0.941 0.941 0.941 0.941 0.941 0.941 0.941 0.941 0.941 0.941 0.941 0.941 0.941 0.941 0.941 0.941 0.941 0.941 0.941 0.941 0.941 0.941 0.941 0.941 0.941 0.941 0.941 0.941 0.941 0.941 0.941 0.941 0.941 0.894 0.894 0.894 0.894 0.894 0.894 0.314 0.314 0.314 0.314 0.314 0.314 0.314 0.314 0.314 0.314 0.314 0.314 0.314 0.314 0.314 0.314 0.314 0.314 0.314 0.314 0.314 0.314 0.314 0.314 0.314 0.314 0.314 0.314 0.314 0.314 0.314 0.314 0.314"/><feFuncB type="discrete" tableValues="0.643 0.643 0.643 0.643 0.643 0.643 0.643 0.643 0.643 0.643 0.643 0.643 0.643 0.643 0.643 0.643 0.643 0.643 0.643 0.643 0.643 0.643 0.643 0.643 0.643 0.643 0.643 0.643 0.643 0.643 0.643 0.643 0.643 0.643 0.643 0.643 0.643 0.643 0.643 0.643 0.643 0.643 0.282 0.282 0.282 0.282 0.282 0.282 0.282 0.282 0.282 0.282 0.282 0.282 0.282 0.282 0.282 0.282 0.282 0.282 0.282 0.282 0.282 0.282 0.282 0.282 0.282 0.282 0.282 0.282 0.282 0.282 0.282 0.282 0.282 0.282 0.282 0.282 0.282 0.282 0.282 0.282 0.282 0.282 0.282 0.282 0.282 0.282 0.282 0.643 0.643 0.643 0.643 0.643 0.643 0.282 0.282 0.282 0.282 0.282 0.282 0.282 0.282 0.282 0.282 0.282 0.282 0.282 0.282 0.282 0.282 0.282 0.282 0.282 0.282 0.282 0.282 0.282 0.282 0.282 0.282 0.282 0.282 0.282 0.282 0.282 0.282 0.282"/><feFuncA type="discrete" tableValues="1 1 1 1 1 1 1 1 1 1 1 1 1 1 1 1 1 1 1 1 1 1 1 1 1 1 1 1 1 1 1 1 1 1 1 1 1 1 1 1 1 1 1 1 1 1 1 1 1 1 1 1 1 1 1 1 1 1 1 1 1 1 1 1 1 1 1 1 1 1 1 1 1 1 1 1 1 1 1 1 1 1 1 1 1 1 1 1 1 1 1 1 1 1 1 1 1 1 1 1 1 1 1 1 1 1 1 1 1 1 1 1 1 1 1 1 1 1 1 1 1 1 1 1 1 1 1 1"/></feComponentTransfer></filter><filter id="fCoast" color-interpolation-filters="sRGB" x="137" y="108" width="320" height="<class '__main__.H'>" filterUnits="userSpaceOnUse"><feTurbulence type="fractalNoise" baseFrequency="0.3 0.2" numOctaves="4" seed="41" result="fCoasth0"/><feColorMatrix in="fCoasth0" type="matrix" values="1 0 0 0 0 1 0 0 0 0 1 0 0 0 0 0 0 0 0 1" result="fCoasth"/><feColorMatrix in="fCoasth" type="matrix" values="1 0 0 0 0 0 1 0 0 0 0 0 1 0 0 0 0 0 0 1" result="fCoastg"/><feColorMatrix in="fCoastg" type="matrix" values="1 0 0 0 0 1 0 0 0 0 1 0 0 0 0 1 0 0 0 0" result="fCoastga"/><feComponentTransfer in="fCoastga"><feFuncR type="discrete" tableValues="0.239 0.239 0.239 0.239 0.239 0.239 0.239 0.239 0.239 0.239 0.239 0.239 0.239 0.239 0.239 0.239 0.239 0.239 0.239 0.239 0.239 0.239 0.239 0.239 0.239 0.239 0.239 0.239 0.239 0.239 0.239 0.239 0.239 0.239 0.239 0.239 0.239 0.239 0.239 0.239 0.239 0.239 0.239 0.239 0.239 0.239 0.239 0.239 0.239 0.239 0.239 0.239 0.239 0.239 0.239 0.239 0.239 0.239 0.239 0.239 0.239 0.239 0.239 0.784 0.784 0.784 0.784 0.784 0.784 0.784 0.784 0.784 0.784 0.784 0.965 0.965 0.965 0.965 0.965 0.965 0.965 0.965 0.965 0.965 0.965 0.965 0.965 0.965 0.965 0.965 0.965 0.965 0.965 0.965 0.957 0.957 0.957 0.957 0.957 0.957 0.957 0.957 0.957 0.957 0.957 0.957 0.957 0.957 0.957 0.957 0.957 0.957 0.957 0.957 0.957 0.957 0.957 0.957 0.957 0.957 0.957 0.957 0.957 0.957 0.957 0.957 0.957 0.957"/><feFuncG type="discrete" tableValues="0.541 0.541 0.541 0.541 0.541 0.541 0.541 0.541 0.541 0.541 0.541 0.541 0.541 0.541 0.541 0.541 0.541 0.541 0.541 0.541 0.541 0.541 0.541 0.541 0.541 0.541 0.541 0.541 0.541 0.541 0.541 0.541 0.541 0.541 0.541 0.541 0.541 0.541 0.541 0.541 0.541 0.541 0.541 0.541 0.541 0.541 0.541 0.541 0.541 0.541 0.541 0.541 0.541 0.541 0.541 0.541 0.541 0.541 0.541 0.541 0.541 0.541 0.541 0.894 0.894 0.894 0.894 0.894 0.894 0.894 0.894 0.894 0.894 0.894 0.878 0.878 0.878 0.878 0.878 0.878 0.878 0.878 0.878 0.878 0.878 0.878 0.878 0.878 0.878 0.878 0.878 0.878 0.878 0.878 0.957 0.957 0.957 0.957 0.957 0.957 0.957 0.957 0.957 0.957 0.957 0.957 0.957 0.957 0.957 0.957 0.957 0.957 0.957 0.957 0.957 0.957 0.957 0.957 0.957 0.957 0.957 0.957 0.957 0.957 0.957 0.957 0.957 0.957"/><feFuncB type="discrete" tableValues="0.314 0.314 0.314 0.314 0.314 0.314 0.314 0.314 0.314 0.314 0.314 0.314 0.314 0.314 0.314 0.314 0.314 0.314 0.314 0.314 0.314 0.314 0.314 0.314 0.314 0.314 0.314 0.314 0.314 0.314 0.314 0.314 0.314 0.314 0.314 0.314 0.314 0.314 0.314 0.314 0.314 0.314 0.314 0.314 0.314 0.314 0.314 0.314 0.314 0.314 0.314 0.314 0.314 0.314 0.314 0.314 0.314 0.314 0.314 0.314 0.314 0.314 0.314 0.643 0.643 0.643 0.643 0.643 0.643 0.643 0.643 0.643 0.643 0.643 0.643 0.643 0.643 0.643 0.643 0.643 0.643 0.643 0.643 0.643 0.643 0.643 0.643 0.643 0.643 0.643 0.643 0.643 0.643 0.643 0.925 0.925 0.925 0.925 0.925 0.925 0.925 0.925 0.925 0.925 0.925 0.925 0.925 0.925 0.925 0.925 0.925 0.925 0.925 0.925 0.925 0.925 0.925 0.925 0.925 0.925 0.925 0.925 0.925 0.925 0.925 0.925 0.925 0.925"/><feFuncA type="discrete" tableValues="1 1 1 1 1 1 1 1 1 1 1 1 1 1 1 1 1 1 1 1 1 1 1 1 1 1 1 1 1 1 1 1 1 1 1 1 1 1 1 1 1 1 1 1 1 1 1 1 1 1 1 1 1 1 1 1 1 1 1 1 1 1 1 1 1 1 1 1 1 1 1 1 1 1 1 1 1 1 1 1 1 1 1 1 1 1 1 1 1 1 1 1 1 1 1 1 1 1 1 1 1 1 1 1 1 1 1 1 1 1 1 1 1 1 1 1 1 1 1 1 1 1 1 1 1 1 1 1"/></feComponentTransfer></filter><filter id="fTown" color-interpolation-filters="sRGB" x="137" y="108" width="320" height="<class '__main__.H'>" filterUnits="userSpaceOnUse"><feTurbulence type="fractalNoise" baseFrequency="0.25" numOctaves="3" seed="51" result="fTownh0"/><feColorMatrix in="fTownh0" type="matrix" values="1 0 0 0 0 1 0 0 0 0 1 0 0 0 0 0 0 0 0 1" result="fTownh"/><feColorMatrix in="fTownh" type="matrix" values="1 0 0 0 0 0 1 0 0 0 0 0 1 0 0 0 0 0 0 1" result="fTowng"/><feColorMatrix in="fTowng" type="matrix" values="1 0 0 0 0 1 0 0 0 0 1 0 0 0 0 1 0 0 0 0" result="fTownga"/><feComponentTransfer in="fTownga"><feFuncR type="discrete" tableValues="0.239 0.239 0.239 0.239 0.239 0.239 0.239 0.239 0.239 0.239 0.239 0.239 0.239 0.239 0.239 0.239 0.239 0.239 0.239 0.239 0.239 0.239 0.239 0.239 0.239 0.239 0.239 0.239 0.239 0.239 0.239 0.239 0.239 0.239 0.239 0.239 0.239 0.239 0.239 0.239 0.784 0.784 0.784 0.784 0.784 0.784 0.784 0.973 0.973 0.973 0.973 0.973 0.973 0.973 0.973 0.973 0.973 0.973 0.973 0.973 0.973 0.973 0.973 0.973 0.973 0.973 0.973 0.973 0.973 0.973 0.973 0.973 0.973 0.973 0.973 0.973 0.973 0.973 0.973 0.973 0.973 0.973 0.973 0.973 0.878 0.878 0.878 0.878 0.878 0.878 0.878 0.878 0.878 0.878 0.878 0.878 0.878 0.878 0.878 0.878 0.878 0.878 0.878 0.878 0.878 0.878 0.878 0.878 0.878 0.878 0.878 0.878 0.878 0.878 0.878 0.878 0.878 0.878 0.878 0.878 0.878 0.878 0.878 0.878 0.878 0.878 0.878 0.878"/><feFuncG type="discrete" tableValues="0.541 0.541 0.541 0.541 0.541 0.541 0.541 0.541 0.541 0.541 0.541 0.541 0.541 0.541 0.541 0.541 0.541 0.541 0.541 0.541 0.541 0.541 0.541 0.541 0.541 0.541 0.541 0.541 0.541 0.541 0.541 0.541 0.541 0.541 0.541 0.541 0.541 0.541 0.541 0.541 0.894 0.894 0.894 0.894 0.894 0.894 0.894 0.847 0.847 0.847 0.847 0.847 0.847 0.847 0.847 0.847 0.847 0.847 0.847 0.847 0.847 0.847 0.847 0.847 0.847 0.847 0.847 0.847 0.847 0.847 0.847 0.847 0.847 0.847 0.847 0.847 0.847 0.847 0.847 0.847 0.847 0.847 0.847 0.847 0.314 0.314 0.314 0.314 0.314 0.314 0.314 0.314 0.314 0.314 0.314 0.314 0.314 0.314 0.314 0.314 0.314 0.314 0.314 0.314 0.314 0.314 0.314 0.314 0.314 0.314 0.314 0.314 0.314 0.314 0.314 0.314 0.314 0.314 0.314 0.314 0.314 0.314 0.314 0.314 0.314 0.314 0.314 0.314"/><feFuncB type="discrete" tableValues="0.314 0.314 0.314 0.314 0.314 0.314 0.314 0.314 0.314 0.314 0.314 0.314 0.314 0.314 0.314 0.314 0.314 0.314 0.314 0.314 0.314 0.314 0.314 0.314 0.314 0.314 0.314 0.314 0.314 0.314 0.314 0.314 0.314 0.314 0.314 0.314 0.314 0.314 0.314 0.314 0.643 0.643 0.643 0.643 0.643 0.643 0.643 0.847 0.847 0.847 0.847 0.847 0.847 0.847 0.847 0.847 0.847 0.847 0.847 0.847 0.847 0.847 0.847 0.847 0.847 0.847 0.847 0.847 0.847 0.847 0.847 0.847 0.847 0.847 0.847 0.847 0.847 0.847 0.847 0.847 0.847 0.847 0.847 0.847 0.282 0.282 0.282 0.282 0.282 0.282 0.282 0.282 0.282 0.282 0.282 0.282 0.282 0.282 0.282 0.282 0.282 0.282 0.282 0.282 0.282 0.282 0.282 0.282 0.282 0.282 0.282 0.282 0.282 0.282 0.282 0.282 0.282 0.282 0.282 0.282 0.282 0.282 0.282 0.282 0.282 0.282 0.282 0.282"/><feFuncA type="discrete" tableValues="1 1 1 1 1 1 1 1 1 1 1 1 1 1 1 1 1 1 1 1 1 1 1 1 1 1 1 1 1 1 1 1 1 1 1 1 1 1 1 1 1 1 1 1 1 1 1 1 1 1 1 1 1 1 1 1 1 1 1 1 1 1 1 1 1 1 1 1 1 1 1 1 1 1 1 1 1 1 1 1 1 1 1 1 1 1 1 1 1 1 1 1 1 1 1 1 1 1 1 1 1 1 1 1 1 1 1 1 1 1 1 1 1 1 1 1 1 1 1 1 1 1 1 1 1 1 1 1"/></feComponentTransfer></filter><filter id="fYB" color-interpolation-filters="sRGB" x="137" y="108" width="320" height="<class '__main__.H'>" filterUnits="userSpaceOnUse"><feTurbulence type="fractalNoise" baseFrequency="0.25" numOctaves="3" seed="61" result="fYBh0"/><feColorMatrix in="fYBh0" type="matrix" values="1 0 0 0 0 1 0 0 0 0 1 0 0 0 0 0 0 0 0 1" result="fYBh"/><feColorMatrix in="fYBh" type="matrix" values="1 0 0 0 0 0 1 0 0 0 0 0 1 0 0 0 0 0 0 1" result="fYBg"/><feColorMatrix in="fYBg" type="matrix" values="1 0 0 0 0 1 0 0 0 0 1 0 0 0 0 1 0 0 0 0" result="fYBga"/><feComponentTransfer in="fYBga"><feFuncR type="discrete" tableValues="0.973 0.973 0.973 0.973 0.973 0.973 0.973 0.973 0.973 0.973 0.973 0.973 0.973 0.973 0.973 0.973 0.973 0.973 0.973 0.973 0.973 0.973 0.973 0.973 0.973 0.973 0.973 0.973 0.973 0.973 0.973 0.973 0.973 0.973 0.973 0.973 0.973 0.973 0.973 0.973 0.973 0.973 0.973 0.973 0.973 0.973 0.973 0.973 0.973 0.973 0.973 0.973 0.973 0.973 0.973 0.973 0.973 0.973 0.973 0.973 0.973 0.973 0.973 0.973 0.965 0.965 0.965 0.965 0.965 0.965 0.965 0.965 0.965 0.965 0.965 0.965 0.965 0.784 0.784 0.784 0.784 0.784 0.784 0.784 0.784 0.784 0.973 0.973 0.973 0.973 0.973 0.973 0.973 0.973 0.973 0.878 0.878 0.878 0.878 0.878 0.878 0.878 0.878 0.878 0.878 0.878 0.878 0.878 0.878 0.878 0.878 0.878 0.878 0.878 0.878 0.878 0.878 0.878 0.878 0.878 0.878 0.878 0.878 0.878 0.878 0.878 0.878 0.878"/><feFuncG type="discrete" tableValues="0.941 0.941 0.941 0.941 0.941 0.941 0.941 0.941 0.941 0.941 0.941 0.941 0.941 0.941 0.941 0.941 0.941 0.941 0.941 0.941 0.941 0.941 0.941 0.941 0.941 0.941 0.941 0.941 0.941 0.941 0.941 0.941 0.941 0.941 0.941 0.941 0.941 0.941 0.941 0.941 0.941 0.941 0.941 0.941 0.941 0.941 0.941 0.941 0.941 0.941 0.941 0.941 0.941 0.941 0.941 0.941 0.941 0.941 0.941 0.941 0.941 0.941 0.941 0.941 0.878 0.878 0.878 0.878 0.878 0.878 0.878 0.878 0.878 0.878 0.878 0.878 0.878 0.894 0.894 0.894 0.894 0.894 0.894 0.894 0.894 0.894 0.847 0.847 0.847 0.847 0.847 0.847 0.847 0.847 0.847 0.314 0.314 0.314 0.314 0.314 0.314 0.314 0.314 0.314 0.314 0.314 0.314 0.314 0.314 0.314 0.314 0.314 0.314 0.314 0.314 0.314 0.314 0.314 0.314 0.314 0.314 0.314 0.314 0.314 0.314 0.314 0.314 0.314"/><feFuncB type="discrete" tableValues="0.282 0.282 0.282 0.282 0.282 0.282 0.282 0.282 0.282 0.282 0.282 0.282 0.282 0.282 0.282 0.282 0.282 0.282 0.282 0.282 0.282 0.282 0.282 0.282 0.282 0.282 0.282 0.282 0.282 0.282 0.282 0.282 0.282 0.282 0.282 0.282 0.282 0.282 0.282 0.282 0.282 0.282 0.282 0.282 0.282 0.282 0.282 0.282 0.282 0.282 0.282 0.282 0.282 0.282 0.282 0.282 0.282 0.282 0.282 0.282 0.282 0.282 0.282 0.282 0.643 0.643 0.643 0.643 0.643 0.643 0.643 0.643 0.643 0.643 0.643 0.643 0.643 0.643 0.643 0.643 0.643 0.643 0.643 0.643 0.643 0.643 0.847 0.847 0.847 0.847 0.847 0.847 0.847 0.847 0.847 0.282 0.282 0.282 0.282 0.282 0.282 0.282 0.282 0.282 0.282 0.282 0.282 0.282 0.282 0.282 0.282 0.282 0.282 0.282 0.282 0.282 0.282 0.282 0.282 0.282 0.282 0.282 0.282 0.282 0.282 0.282 0.282 0.282"/><feFuncA type="discrete" tableValues="1 1 1 1 1 1 1 1 1 1 1 1 1 1 1 1 1 1 1 1 1 1 1 1 1 1 1 1 1 1 1 1 1 1 1 1 1 1 1 1 1 1 1 1 1 1 1 1 1 1 1 1 1 1 1 1 1 1 1 1 1 1 1 1 1 1 1 1 1 1 1 1 1 1 1 1 1 1 1 1 1 1 1 1 1 1 1 1 1 1 1 1 1 1 1 1 1 1 1 1 1 1 1 1 1 1 1 1 1 1 1 1 1 1 1 1 1 1 1 1 1 1 1 1 1 1 1 1"/></feComponentTransfer></filter><filter id="fLag" color-interpolation-filters="sRGB" x="137" y="108" width="320" height="<class '__main__.H'>" filterUnits="userSpaceOnUse"><feTurbulence type="fractalNoise" baseFrequency="0.3" numOctaves="2" seed="71" result="fLagh0"/><feColorMatrix in="fLagh0" type="matrix" values="1 0 0 0 0 1 0 0 0 0 1 0 0 0 0 0 0 0 0 1" result="fLagh"/><feColorMatrix in="fLagh" type="matrix" values="1 0 0 0 0 0 1 0 0 0 0 0 1 0 0 0 0 0 0 1" result="fLagg"/><feColorMatrix in="fLagg" type="matrix" values="1 0 0 0 0 1 0 0 0 0 1 0 0 0 0 1 0 0 0 0" result="fLagga"/><feComponentTransfer in="fLagga"><feFuncR type="discrete" tableValues="0.784 0.784 0.784 0.784 0.784 0.784 0.784 0.784 0.784 0.784 0.784 0.784 0.784 0.784 0.784 0.784 0.784 0.784 0.784 0.784 0.784 0.784 0.784 0.784 0.784 0.784 0.784 0.784 0.784 0.784 0.784 0.784 0.784 0.784 0.784 0.784 0.784 0.784 0.784 0.784 0.784 0.784 0.784 0.784 0.784 0.784 0.784 0.784 0.784 0.784 0.784 0.784 0.784 0.784 0.784 0.784 0.376 0.376 0.376 0.376 0.376 0.376 0.376 0.376 0.376 0.376 0.376 0.376 0.376 0.376 0.376 0.376 0.965 0.965 0.965 0.965 0.965 0.965 0.965 0.965 0.965 0.965 0.965 0.965 0.965 0.965 0.965 0.965 0.965 0.965 0.965 0.965 0.965 0.965 0.965 0.965 0.965 0.965 0.965 0.965 0.965 0.965 0.965 0.965 0.965 0.965 0.965 0.965 0.965 0.965 0.965 0.965 0.965 0.965 0.965 0.965 0.965 0.965 0.965 0.965 0.965 0.965 0.965 0.965 0.965 0.965 0.965 0.965"/><feFuncG type="discrete" tableValues="0.878 0.878 0.878 0.878 0.878 0.878 0.878 0.878 0.878 0.878 0.878 0.878 0.878 0.878 0.878 0.878 0.878 0.878 0.878 0.878 0.878 0.878 0.878 0.878 0.878 0.878 0.878 0.878 0.878 0.878 0.878 0.878 0.878 0.878 0.878 0.878 0.878 0.878 0.878 0.878 0.878 0.878 0.878 0.878 0.878 0.878 0.878 0.878 0.878 0.878 0.878 0.878 0.878 0.878 0.878 0.878 0.69 0.69 0.69 0.69 0.69 0.69 0.69 0.69 0.69 0.69 0.69 0.69 0.69 0.69 0.69 0.69 0.878 0.878 0.878 0.878 0.878 0.878 0.878 0.878 0.878 0.878 0.878 0.878 0.878 0.878 0.878 0.878 0.878 0.878 0.878 0.878 0.878 0.878 0.878 0.878 0.878 0.878 0.878 0.878 0.878 0.878 0.878 0.878 0.878 0.878 0.878 0.878 0.878 0.878 0.878 0.878 0.878 0.878 0.878 0.878 0.878 0.878 0.878 0.878 0.878 0.878 0.878 0.878 0.878 0.878 0.878 0.878"/><feFuncB type="discrete" tableValues="0.973 0.973 0.973 0.973 0.973 0.973 0.973 0.973 0.973 0.973 0.973 0.973 0.973 0.973 0.973 0.973 0.973 0.973 0.973 0.973 0.973 0.973 0.973 0.973 0.973 0.973 0.973 0.973 0.973 0.973 0.973 0.973 0.973 0.973 0.973 0.973 0.973 0.973 0.973 0.973 0.973 0.973 0.973 0.973 0.973 0.973 0.973 0.973 0.973 0.973 0.973 0.973 0.973 0.973 0.973 0.973 0.847 0.847 0.847 0.847 0.847 0.847 0.847 0.847 0.847 0.847 0.847 0.847 0.847 0.847 0.847 0.847 0.643 0.643 0.643 0.643 0.643 0.643 0.643 0.643 0.643 0.643 0.643 0.643 0.643 0.643 0.643 0.643 0.643 0.643 0.643 0.643 0.643 0.643 0.643 0.643 0.643 0.643 0.643 0.643 0.643 0.643 0.643 0.643 0.643 0.643 0.643 0.643 0.643 0.643 0.643 0.643 0.643 0.643 0.643 0.643 0.643 0.643 0.643 0.643 0.643 0.643 0.643 0.643 0.643 0.643 0.643 0.643"/><feFuncA type="discrete" tableValues="1 1 1 1 1 1 1 1 1 1 1 1 1 1 1 1 1 1 1 1 1 1 1 1 1 1 1 1 1 1 1 1 1 1 1 1 1 1 1 1 1 1 1 1 1 1 1 1 1 1 1 1 1 1 1 1 1 1 1 1 1 1 1 1 1 1 1 1 1 1 1 1 1 1 1 1 1 1 1 1 1 1 1 1 1 1 1 1 1 1 1 1 1 1 1 1 1 1 1 1 1 1 1 1 1 1 1 1 1 1 1 1 1 1 1 1 1 1 1 1 1 1 1 1 1 1 1 1"/></feComponentTransfer></filter><filter id="fOr" color-interpolation-filters="sRGB" x="137" y="108" width="320" height="<class '__main__.H'>" filterUnits="userSpaceOnUse"><feTurbulence type="fractalNoise" baseFrequency="0.3" numOctaves="2" seed="81" result="fOrh0"/><feColorMatrix in="fOrh0" type="matrix" values="1 0 0 0 0 1 0 0 0 0 1 0 0 0 0 0 0 0 0 1" result="fOrh"/><feColorMatrix in="fOrh" type="matrix" values="1 0 0 0 0 0 1 0 0 0 0 0 1 0 0 0 0 0 0 1" result="fOrg"/><feColorMatrix in="fOrg" type="matrix" values="1 0 0 0 0 1 0 0 0 0 1 0 0 0 0 1 0 0 0 0" result="fOrga"/><feComponentTransfer in="fOrga"><feFuncR type="discrete" tableValues="0.878 0.878 0.878 0.878 0.878 0.878 0.878 0.878 0.878 0.878 0.878 0.878 0.878 0.878 0.878 0.878 0.878 0.878 0.878 0.878 0.878 0.878 0.878 0.878 0.878 0.878 0.878 0.878 0.878 0.878 0.878 0.878 0.878 0.878 0.878 0.878 0.878 0.878 0.878 0.878 0.878 0.878 0.878 0.878 0.878 0.878 0.878 0.878 0.878 0.878 0.878 0.878 0.878 0.878 0.878 0.878 0.878 0.878 0.878 0.878 0.878 0.878 0.878 0.878 0.878 0.878 0.965 0.965 0.965 0.965 0.965 0.965 0.965 0.965 0.965 0.965 0.965 0.965 0.965 0.965 0.973 0.973 0.973 0.973 0.973 0.973 0.973 0.973 0.973 0.973 0.973 0.973 0.973 0.973 0.973 0.973 0.973 0.973 0.973 0.973 0.973 0.973 0.973 0.973 0.973 0.973 0.973 0.973 0.973 0.973 0.973 0.973 0.973 0.973 0.973 0.973 0.973 0.973 0.973 0.973 0.973 0.973 0.973 0.973 0.973 0.973 0.973 0.973"/><feFuncG type="discrete" tableValues="0.541 0.541 0.541 0.541 0.541 0.541 0.541 0.541 0.541 0.541 0.541 0.541 0.541 0.541 0.541 0.541 0.541 0.541 0.541 0.541 0.541 0.541 0.541 0.541 0.541 0.541 0.541 0.541 0.541 0.541 0.541 0.541 0.541 0.541 0.541 0.541 0.541 0.541 0.541 0.541 0.541 0.541 0.541 0.541 0.541 0.541 0.541 0.541 0.541 0.541 0.541 0.541 0.541 0.541 0.541 0.541 0.541 0.541 0.541 0.541 0.541 0.541 0.541 0.541 0.541 0.541 0.878 0.878 0.878 0.878 0.878 0.878 0.878 0.878 0.878 0.878 0.878 0.878 0.878 0.878 0.941 0.941 0.941 0.941 0.941 0.941 0.941 0.941 0.941 0.941 0.941 0.941 0.941 0.941 0.941 0.941 0.941 0.941 0.941 0.941 0.941 0.941 0.941 0.941 0.941 0.941 0.941 0.941 0.941 0.941 0.941 0.941 0.941 0.941 0.941 0.941 0.941 0.941 0.941 0.941 0.941 0.941 0.941 0.941 0.941 0.941 0.941 0.941"/><feFuncB type="discrete" tableValues="0.22 0.22 0.22 0.22 0.22 0.22 0.22 0.22 0.22 0.22 0.22 0.22 0.22 0.22 0.22 0.22 0.22 0.22 0.22 0.22 0.22 0.22 0.22 0.22 0.22 0.22 0.22 0.22 0.22 0.22 0.22 0.22 0.22 0.22 0.22 0.22 0.22 0.22 0.22 0.22 0.22 0.22 0.22 0.22 0.22 0.22 0.22 0.22 0.22 0.22 0.22 0.22 0.22 0.22 0.22 0.22 0.22 0.22 0.22 0.22 0.22 0.22 0.22 0.22 0.22 0.22 0.643 0.643 0.643 0.643 0.643 0.643 0.643 0.643 0.643 0.643 0.643 0.643 0.643 0.643 0.282 0.282 0.282 0.282 0.282 0.282 0.282 0.282 0.282 0.282 0.282 0.282 0.282 0.282 0.282 0.282 0.282 0.282 0.282 0.282 0.282 0.282 0.282 0.282 0.282 0.282 0.282 0.282 0.282 0.282 0.282 0.282 0.282 0.282 0.282 0.282 0.282 0.282 0.282 0.282 0.282 0.282 0.282 0.282 0.282 0.282 0.282 0.282"/><feFuncA type="discrete" tableValues="1 1 1 1 1 1 1 1 1 1 1 1 1 1 1 1 1 1 1 1 1 1 1 1 1 1 1 1 1 1 1 1 1 1 1 1 1 1 1 1 1 1 1 1 1 1 1 1 1 1 1 1 1 1 1 1 1 1 1 1 1 1 1 1 1 1 1 1 1 1 1 1 1 1 1 1 1 1 1 1 1 1 1 1 1 1 1 1 1 1 1 1 1 1 1 1 1 1 1 1 1 1 1 1 1 1 1 1 1 1 1 1 1 1 1 1 1 1 1 1 1 1 1 1 1 1 1 1"/></feComponentTransfer></filter><filter id="fBeach" color-interpolation-filters="sRGB" x="137" y="108" width="320" height="<class '__main__.H'>" filterUnits="userSpaceOnUse"><feTurbulence type="fractalNoise" baseFrequency="0.35" numOctaves="2" seed="91" result="fBeachh0"/><feColorMatrix in="fBeachh0" type="matrix" values="1 0 0 0 0 1 0 0 0 0 1 0 0 0 0 0 0 0 0 1" result="fBeachh"/><feColorMatrix in="fBeachh" type="matrix" values="1 0 0 0 0 0 1 0 0 0 0 0 1 0 0 0 0 0 0 1" result="fBeachg"/><feColorMatrix in="fBeachg" type="matrix" values="1 0 0 0 0 1 0 0 0 0 1 0 0 0 0 1 0 0 0 0" result="fBeachga"/><feComponentTransfer in="fBeachga"><feFuncR type="discrete" tableValues="0.847 0.847 0.847 0.847 0.847 0.847 0.847 0.847 0.847 0.847 0.847 0.847 0.847 0.847 0.847 0.847 0.847 0.847 0.847 0.847 0.847 0.847 0.847 0.847 0.847 0.847 0.847 0.847 0.847 0.847 0.847 0.847 0.847 0.847 0.847 0.847 0.847 0.847 0.847 0.847 0.847 0.847 0.847 0.847 0.847 0.847 0.847 0.847 0.847 0.847 0.847 0.847 0.847 0.847 0.847 0.847 0.847 0.847 0.847 0.847 0.847 0.847 0.847 0.847 0.965 0.965 0.965 0.965 0.965 0.965 0.965 0.965 0.965 0.965 0.965 0.965 0.965 0.965 0.965 0.965 0.784 0.784 0.784 0.784 0.784 0.784 0.784 0.784 0.784 0.784 0.784 0.784 0.784 0.784 0.784 0.784 0.784 0.784 0.784 0.784 0.784 0.784 0.784 0.784 0.784 0.784 0.784 0.784 0.784 0.784 0.784 0.784 0.784 0.784 0.784 0.784 0.784 0.784 0.784 0.784 0.784 0.784 0.784 0.784 0.784 0.784 0.784 0.784"/><feFuncG type="discrete" tableValues="0.8 0.8 0.8 0.8 0.8 0.8 0.8 0.8 0.8 0.8 0.8 0.8 0.8 0.8 0.8 0.8 0.8 0.8 0.8 0.8 0.8 0.8 0.8 0.8 0.8 0.8 0.8 0.8 0.8 0.8 0.8 0.8 0.8 0.8 0.8 0.8 0.8 0.8 0.8 0.8 0.8 0.8 0.8 0.8 0.8 0.8 0.8 0.8 0.8 0.8 0.8 0.8 0.8 0.8 0.8 0.8 0.8 0.8 0.8 0.8 0.8 0.8 0.8 0.8 0.878 0.878 0.878 0.878 0.878 0.878 0.878 0.878 0.878 0.878 0.878 0.878 0.878 0.878 0.878 0.878 0.784 0.784 0.784 0.784 0.784 0.784 0.784 0.784 0.784 0.784 0.784 0.784 0.784 0.784 0.784 0.784 0.784 0.784 0.784 0.784 0.784 0.784 0.784 0.784 0.784 0.784 0.784 0.784 0.784 0.784 0.784 0.784 0.784 0.784 0.784 0.784 0.784 0.784 0.784 0.784 0.784 0.784 0.784 0.784 0.784 0.784 0.784 0.784"/><feFuncB type="discrete" tableValues="0.69 0.69 0.69 0.69 0.69 0.69 0.69 0.69 0.69 0.69 0.69 0.69 0.69 0.69 0.69 0.69 0.69 0.69 0.69 0.69 0.69 0.69 0.69 0.69 0.69 0.69 0.69 0.69 0.69 0.69 0.69 0.69 0.69 0.69 0.69 0.69 0.69 0.69 0.69 0.69 0.69 0.69 0.69 0.69 0.69 0.69 0.69 0.69 0.69 0.69 0.69 0.69 0.69 0.69 0.69 0.69 0.69 0.69 0.69 0.69 0.69 0.69 0.69 0.69 0.643 0.643 0.643 0.643 0.643 0.643 0.643 0.643 0.643 0.643 0.643 0.643 0.643 0.643 0.643 0.643 0.784 0.784 0.784 0.784 0.784 0.784 0.784 0.784 0.784 0.784 0.784 0.784 0.784 0.784 0.784 0.784 0.784 0.784 0.784 0.784 0.784 0.784 0.784 0.784 0.784 0.784 0.784 0.784 0.784 0.784 0.784 0.784 0.784 0.784 0.784 0.784 0.784 0.784 0.784 0.784 0.784 0.784 0.784 0.784 0.784 0.784 0.784 0.784"/><feFuncA type="discrete" tableValues="1 1 1 1 1 1 1 1 1 1 1 1 1 1 1 1 1 1 1 1 1 1 1 1 1 1 1 1 1 1 1 1 1 1 1 1 1 1 1 1 1 1 1 1 1 1 1 1 1 1 1 1 1 1 1 1 1 1 1 1 1 1 1 1 1 1 1 1 1 1 1 1 1 1 1 1 1 1 1 1 1 1 1 1 1 1 1 1 1 1 1 1 1 1 1 1 1 1 1 1 1 1 1 1 1 1 1 1 1 1 1 1 1 1 1 1 1 1 1 1 1 1 1 1 1 1 1 1"/></feComponentTransfer></filter><filter id="fLM_lg" color-interpolation-filters="sRGB" x="137" y="108" width="320" height="<class '__main__.H'>" filterUnits="userSpaceOnUse"><feTurbulence type="fractalNoise" baseFrequency="0.2 0.12" numOctaves="4" seed="24" result="fLM_lgh0"/><feColorMatrix in="fLM_lgh0" type="matrix" values="1 0 0 0 0 1 0 0 0 0 1 0 0 0 0 0 0 0 0 1" result="fLM_lgh"/><feTurbulence type="fractalNoise" baseFrequency="0.03" numOctaves="2" seed="25" result="fLM_lgl0"/><feColorMatrix in="fLM_lgl0" type="matrix" values="1 0 0 0 0 1 0 0 0 0 1 0 0 0 0 0 0 0 0 1" result="fLM_lgl"/><feComposite in="fLM_lgh" in2="fLM_lgl" operator="arithmetic" k1="0" k2="0.600" k3="0.400" k4="0" result="fLM_lgg"/><feColorMatrix in="fLM_lgg" type="matrix" values="1 0 0 0 0 1 0 0 0 0 1 0 0 0 0 1 0 0 0 0" result="fLM_lgga"/><feComponentTransfer in="fLM_lgga"><feFuncR type="discrete" tableValues="0 0 0 0 0 0 0 0 0 0 0 0 0 0 0 0 0 0 0 0 0 0 0 0 0 0 0 0 0 0 0 0 0 0 0 0 0 0 0 0 0 0 0 0 0 0 0 0 0 0 0 0 0 0 0 0 0 0 0 0 0 0 0 0 0 0 0 0 0 0 0 0 0.784 0.784 0.784 0.784 0.784 0.784 0.784 0.784 0.784 0.784 0.784 0.784 0.784 0.784 0.784 0.784 0.784 0.784 0.784 0.784 0.784 0.784 0.784 0.784 0.784 0.784 0.784 0.784 0.784 0.784 0.784 0.784 0.784 0.784 0.784 0.784 0.784 0.784 0.784 0.784 0.784 0.784 0.784 0.784 0.784 0.784 0.784 0.784 0.784 0.784 0.784 0.784 0.784 0.784 0.784 0.784"/><feFuncG type="discrete" tableValues="0 0 0 0 0 0 0 0 0 0 0 0 0 0 0 0 0 0 0 0 0 0 0 0 0 0 0 0 0 0 0 0 0 0 0 0 0 0 0 0 0 0 0 0 0 0 0 0 0 0 0 0 0 0 0 0 0 0 0 0 0 0 0 0 0 0 0 0 0 0 0 0 0.894 0.894 0.894 0.894 0.894 0.894 0.894 0.894 0.894 0.894 0.894 0.894 0.894 0.894 0.894 0.894 0.894 0.894 0.894 0.894 0.894 0.894 0.894 0.894 0.894 0.894 0.894 0.894 0.894 0.894 0.894 0.894 0.894 0.894 0.894 0.894 0.894 0.894 0.894 0.894 0.894 0.894 0.894 0.894 0.894 0.894 0.894 0.894 0.894 0.894 0.894 0.894 0.894 0.894 0.894 0.894"/><feFuncB type="discrete" tableValues="0 0 0 0 0 0 0 0 0 0 0 0 0 0 0 0 0 0 0 0 0 0 0 0 0 0 0 0 0 0 0 0 0 0 0 0 0 0 0 0 0 0 0 0 0 0 0 0 0 0 0 0 0 0 0 0 0 0 0 0 0 0 0 0 0 0 0 0 0 0 0 0 0.643 0.643 0.643 0.643 0.643 0.643 0.643 0.643 0.643 0.643 0.643 0.643 0.643 0.643 0.643 0.643 0.643 0.643 0.643 0.643 0.643 0.643 0.643 0.643 0.643 0.643 0.643 0.643 0.643 0.643 0.643 0.643 0.643 0.643 0.643 0.643 0.643 0.643 0.643 0.643 0.643 0.643 0.643 0.643 0.643 0.643 0.643 0.643 0.643 0.643 0.643 0.643 0.643 0.643 0.643 0.643"/><feFuncA type="discrete" tableValues="0 0 0 0 0 0 0 0 0 0 0 0 0 0 0 0 0 0 0 0 0 0 0 0 0 0 0 0 0 0 0 0 0 0 0 0 0 0 0 0 0 0 0 0 0 0 0 0 0 0 0 0 0 0 0 0 0 0 0 0 0 0 0 0 0 0 0 0 0 0 0 0 1 1 1 1 1 1 1 1 1 1 1 1 1 1 1 1 1 1 1 1 1 1 1 1 1 1 1 1 1 1 1 1 1 1 1 1 1 1 1 1 1 1 1 1 1 1 1 1 1 1 1 1 1 1 1 1"/></feComponentTransfer></filter><filter id="fLM_bg" color-interpolation-filters="sRGB" x="137" y="108" width="320" height="<class '__main__.H'>" filterUnits="userSpaceOnUse"><feTurbulence type="fractalNoise" baseFrequency="0.2 0.12" numOctaves="4" seed="28" result="fLM_bgh0"/><feColorMatrix in="fLM_bgh0" type="matrix" values="1 0 0 0 0 1 0 0 0 0 1 0 0 0 0 0 0 0 0 1" result="fLM_bgh"/><feTurbulence type="fractalNoise" baseFrequency="0.03" numOctaves="2" seed="25" result="fLM_bgl0"/><feColorMatrix in="fLM_bgl0" type="matrix" values="1 0 0 0 0 1 0 0 0 0 1 0 0 0 0 0 0 0 0 1" result="fLM_bgl"/><feComposite in="fLM_bgh" in2="fLM_bgl" operator="arithmetic" k1="0" k2="0.600" k3="0.400" k4="0" result="fLM_bgg"/><feColorMatrix in="fLM_bgg" type="matrix" values="1 0 0 0 0 1 0 0 0 0 1 0 0 0 0 1 0 0 0 0" result="fLM_bgga"/><feComponentTransfer in="fLM_bgga"><feFuncR type="discrete" tableValues="0 0 0 0 0 0 0 0 0 0 0 0 0 0 0 0 0 0 0 0 0 0 0 0 0 0 0 0 0 0 0 0 0 0 0 0 0 0 0 0 0 0 0 0 0 0 0 0 0 0 0 0 0 0 0 0 0 0 0 0 0 0 0 0 0 0 0 0 0 0 0 0 0 0 0.965 0.965 0.965 0.965 0.965 0.965 0.965 0.965 0.965 0.965 0.965 0.965 0.965 0.965 0.965 0.965 0.965 0.965 0.965 0.965 0.965 0.965 0.965 0.965 0.965 0.965 0.965 0.965 0.965 0.965 0.965 0.965 0.965 0.965 0.965 0.965 0.965 0.965 0.965 0.965 0.965 0.965 0.965 0.965 0.965 0.965 0.965 0.965 0.965 0.965 0.965 0.965 0.965 0.965"/><feFuncG type="discrete" tableValues="0 0 0 0 0 0 0 0 0 0 0 0 0 0 0 0 0 0 0 0 0 0 0 0 0 0 0 0 0 0 0 0 0 0 0 0 0 0 0 0 0 0 0 0 0 0 0 0 0 0 0 0 0 0 0 0 0 0 0 0 0 0 0 0 0 0 0 0 0 0 0 0 0 0 0.878 0.878 0.878 0.878 0.878 0.878 0.878 0.878 0.878 0.878 0.878 0.878 0.878 0.878 0.878 0.878 0.878 0.878 0.878 0.878 0.878 0.878 0.878 0.878 0.878 0.878 0.878 0.878 0.878 0.878 0.878 0.878 0.878 0.878 0.878 0.878 0.878 0.878 0.878 0.878 0.878 0.878 0.878 0.878 0.878 0.878 0.878 0.878 0.878 0.878 0.878 0.878 0.878 0.878"/><feFuncB type="discrete" tableValues="0 0 0 0 0 0 0 0 0 0 0 0 0 0 0 0 0 0 0 0 0 0 0 0 0 0 0 0 0 0 0 0 0 0 0 0 0 0 0 0 0 0 0 0 0 0 0 0 0 0 0 0 0 0 0 0 0 0 0 0 0 0 0 0 0 0 0 0 0 0 0 0 0 0 0.643 0.643 0.643 0.643 0.643 0.643 0.643 0.643 0.643 0.643 0.643 0.643 0.643 0.643 0.643 0.643 0.643 0.643 0.643 0.643 0.643 0.643 0.643 0.643 0.643 0.643 0.643 0.643 0.643 0.643 0.643 0.643 0.643 0.643 0.643 0.643 0.643 0.643 0.643 0.643 0.643 0.643 0.643 0.643 0.643 0.643 0.643 0.643 0.643 0.643 0.643 0.643 0.643 0.643"/><feFuncA type="discrete" tableValues="0 0 0 0 0 0 0 0 0 0 0 0 0 0 0 0 0 0 0 0 0 0 0 0 0 0 0 0 0 0 0 0 0 0 0 0 0 0 0 0 0 0 0 0 0 0 0 0 0 0 0 0 0 0 0 0 0 0 0 0 0 0 0 0 0 0 0 0 0 0 0 0 0 0 1 1 1 1 1 1 1 1 1 1 1 1 1 1 1 1 1 1 1 1 1 1 1 1 1 1 1 1 1 1 1 1 1 1 1 1 1 1 1 1 1 1 1 1 1 1 1 1 1 1 1 1 1 1"/></feComponentTransfer></filter><clipPath id="cUR"><path d="M418 95 L480 95 L480 355 L450 345 C440.8 344.5 433.3 352.8 425 352 C416.7 351.2 407.5 341.2 400 340 L380 345 L388 310 C391.3 297.5 396.3 283.3 400 270 C403.7 256.7 407.5 243.3 410 230 C412.5 216.7 413.7 203.3 415 190 C416.3 176.7 417.5 165.8 418 150 L418 95 Z"/></clipPath><clipPath id="cCT"><path d="M366 95 L418 95 L418 150 C417.5 165.8 416.3 176.7 415 190 C413.7 203.3 412.5 216.7 410 230 C407.5 243.3 403.7 256.7 400 270 C396.3 283.3 391.3 298.3 388 310 L380 340 L337 340 L341 328 C343.7 320.0 348.8 304.0 353 292 C357.2 280.0 362.0 267.7 366 256 C370.0 244.3 374.3 230.5 377 222 C379.7 213.5 380.3 210.7 382 205 C383.7 199.3 385.7 193.5 387 188 C388.3 182.5 389.3 177.5 390 172 C390.7 166.5 391.0 160.7 391 155 C391.0 149.3 390.7 143.5 390 138 C389.3 132.5 388.7 126.5 387 122 C385.3 117.5 382.5 113.3 380 111 C377.5 108.7 374.3 110.7 372 108 L366 95 Z"/></clipPath><clipPath id="cYB"><path d="M386 176 C388.7 170.8 395.0 170.0 398 174 C401.0 178.0 402.8 190.0 404 200 C405.2 210.0 406.3 222.3 405 234 C403.7 245.7 399.2 257.3 396 270 C392.8 282.7 388.7 298.3 386 310 L380 340 L337 340 L341 328 C343.7 320.0 348.8 304.0 353 292 C357.2 280.0 362.0 267.7 366 256 C370.0 244.3 374.3 230.5 377 222 C379.7 213.5 380.5 212.7 382 205 C383.5 197.3 383.3 181.2 386 176 Z"/></clipPath><clipPath id="cLR"><path d="M378 335 L480 335 L480 680 L345 680 L345 600 C345.3 580.0 346.8 571.7 347 560 C347.2 548.3 343.8 540.8 346 530 C348.2 519.2 355.3 505.0 360 495 C364.7 485.0 371.3 480.8 374 470 C376.7 459.2 375.0 445.0 376 430 C377.0 415.0 379.7 395.8 380 380 L378 335 Z"/></clipPath><clipPath id="cLM"><path d="M270 560 C275.3 555.5 291.3 564.3 300 563 C308.7 561.7 316.2 555.8 322 552 C327.8 548.2 331.2 535.3 335 540 C338.8 544.7 342.8 570.0 345 580 C347.2 590.0 348.0 583.3 348 600 L345 680 L258 680 L262 620 C263.7 605.0 266.7 600.0 268 590 C269.3 580.0 264.7 564.5 270 560 Z"/></clipPath><clipPath id="cY1"><path d="M328 390 C331.0 380.8 339.8 355.3 343 346 C346.2 336.7 341.2 335.0 347 334 L378 340 L380 380 L376 430 L361 431 C356.8 430.5 354.2 427.0 351 427 L342 431 L341 420 C340.2 415.8 339.7 409.2 337 406 L325 401 L328 390 Z"/></clipPath><clipPath id="cY2"><path d="M361 431 C363.2 428.7 373.8 423.5 376 430 C378.2 436.5 376.3 459.2 374 470 C371.7 480.8 366.0 487.5 362 495 C358.0 502.5 352.3 508.5 350 515 C347.7 521.5 347.5 524.8 348 534 C348.5 543.2 351.5 559.2 353 570 L357 599 L347 597 C344.2 592.2 343.0 580.5 340 570 C337.0 559.5 332.0 543.7 329 534 L322 512 L332 503 C335.7 500.3 340.0 499.2 344 496 C348.0 492.8 353.2 488.0 356 484 C358.8 480.0 359.8 478.7 361 472 C362.2 465.3 363.0 450.8 363 444 C363.0 437.2 358.8 433.3 361 431 Z"/></clipPath><clipPath id="cY3"><path d="M262 556 C263.2 552.7 264.3 549.3 266 550 C267.7 550.7 270.3 554.2 272 560 C273.7 565.8 275.7 575.8 276 585 C276.3 594.2 275.0 605.8 274 615 C273.0 624.2 271.3 629.2 270 640 L266 680 L256 680 L258 640 C258.7 626.7 259.8 611.7 260 600 C260.2 588.3 258.7 577.3 259 570 C259.3 562.7 260.8 559.3 262 556 Z"/></clipPath><clipPath id="cMx3"><path d="M252 569 C254.2 567.2 256.9 567.8 259 565 C261.1 562.2 264.2 546.2 264.4 552 C264.6 557.8 261.1 585.3 260 600 C258.9 614.7 258.7 626.7 258 640 L256 680 L242 680 L242 621 C241.8 607.1 239.9 604.0 240.6 596.5 C241.3 589.0 244.1 580.6 246 576 C247.9 571.4 249.8 570.8 252 569 Z"/></clipPath><clipPath id="cTown"><path d="M282.5 494 C286.1 490.0 291.4 487.8 295 487 C298.6 486.2 300.2 488.0 304 489 C307.8 490.0 313.3 490.7 318 493 C322.7 495.3 330.3 498.5 332 503 C333.7 507.5 329.2 513.8 328 520 C326.8 526.2 326.7 534.0 325 540 C323.3 546.0 321.3 552.2 318 556 C314.7 559.8 310.0 561.8 305 563 C300.0 564.2 292.8 564.2 288 563 C283.2 561.8 279.0 559.5 276 556 C273.0 552.5 271.7 546.8 270 542 C268.3 537.2 265.4 532.2 266 527 C266.6 521.8 270.8 516.5 273.5 511 C276.2 505.5 278.9 498.0 282.5 494 Z"/></clipPath><clipPath id="cLag"><path d="M328 390 L343 346 L348 348 L334 395 L325 401 L328 390 Z"/></clipPath><clipPath id="cBeach"><path d="M372 108 C369.8 105.2 377.5 108.7 380 111 C382.5 113.3 385.3 117.5 387 122 C388.7 126.5 389.3 132.5 390 138 C390.7 143.5 391.0 149.3 391 155 C391.0 160.7 390.7 166.5 390 172 C389.3 177.5 388.3 182.5 387 188 C385.7 193.5 383.7 199.3 382 205 C380.3 210.7 379.7 213.5 377 222 C374.3 230.5 370.0 244.3 366 256 C362.0 267.7 357.2 280.0 353 292 C348.8 304.0 343.7 320.0 341 328 C338.3 336.0 340.3 330.2 337 340 C333.7 349.8 326.8 373.7 321 387 C315.2 400.3 308.0 409.0 302 420 C296.0 431.0 280.7 458.0 285 453 L328 390 L343 346 C346.2 336.7 344.3 342.0 347 334 C349.7 326.0 355.0 310.0 359 298 C363.0 286.0 367.5 272.5 371 262 C374.5 251.5 377.5 242.8 380 235 C382.5 227.2 384.2 221.7 386 215 C387.8 208.3 389.7 201.7 391 195 C392.3 188.3 393.3 182.5 394 175 C394.7 167.5 395.2 157.8 395 150 C394.8 142.2 396.8 135.0 393 128 C389.2 121.0 374.2 110.8 372 108 Z"/></clipPath><clipPath id="cSpit"><path d="M302 420 C296.0 431.0 290.7 441.8 285 453 C279.3 464.2 272.8 477.8 268 487 C263.2 496.2 259.5 502.2 256 508 C252.5 513.8 248.8 517.5 247 522 L245 535 L250 537 C252.8 534.5 256.7 528.3 262 520 C267.3 511.7 276.2 498.2 282 487 C287.8 475.8 291.5 464.2 297 453 C302.5 441.8 310.3 428.7 315 420 L325 401 L328 390 L321 387 L302 420 Z"/></clipPath><clipPath id="cStreak"><path d="M400 392 C401.7 391.3 405.3 394.2 408 398 C410.7 401.8 413.3 408.8 416 415 C418.7 421.2 422.0 428.8 424 435 C426.0 441.2 428.3 448.5 428 452 C427.7 455.5 424.7 458.3 422 456 C419.3 453.7 415.0 444.3 412 438 C409.0 431.7 406.3 424.0 404 418 C401.7 412.0 398.7 406.3 398 402 C397.3 397.7 398.3 392.7 400 392 Z"/></clipPath><clipPath id="cOrc"><path d="M374 232 C375.5 228.7 379.7 227.0 382 228 C384.3 229.0 387.3 233.3 388 238 C388.7 242.7 387.7 252.7 386 256 C384.3 259.3 380.2 259.3 378 258 C375.8 256.7 373.7 252.3 373 248 C372.3 243.7 372.5 235.3 374 232 Z"/></clipPath></defs><rect x="137" y="108" width="320" height="551" fill="#000"/><path fill="#6e80b2" d="M320 95 C293.5 97.2 320.5 102.5 321 108 C321.5 113.5 322.3 121.0 323 128 C323.7 135.0 323.8 143.3 325 150 C326.2 156.7 328.3 162.5 330 168 L335 183 L326 218 C322.8 229.8 320.3 242.3 316 254 C311.7 265.7 303.7 279.7 300 288 C296.3 296.3 297.3 294.7 294 304 C290.7 313.3 286.5 328.5 280 344 C273.5 359.5 263.3 381.0 255 397 C246.7 413.0 236.3 429.8 230 440 C223.7 450.2 220.8 452.7 217 458 C213.2 463.3 209.7 467.7 207 472 C204.3 476.3 203.2 478.3 201 484 C198.8 489.7 198.7 496.5 194 506 C189.3 515.5 178.2 532.0 173 541 C167.8 550.0 166.7 554.0 163 560 C159.3 566.0 154.8 570.5 151 577 C147.2 583.5 144.3 590.2 140 599 C135.7 607.8 128.3 616.5 125 630 L120 680 L480 680 L480 95 L320 95 Z"/><path fill="#f6e0a4" d="M366 95 C348.0 97.2 369.7 105.3 372 108 C374.3 110.7 377.5 108.7 380 111 C382.5 113.3 385.3 117.5 387 122 C388.7 126.5 389.3 132.5 390 138 C390.7 143.5 391.0 149.3 391 155 C391.0 160.7 390.7 166.5 390 172 C389.3 177.5 388.3 182.5 387 188 C385.7 193.5 383.7 199.3 382 205 C380.3 210.7 379.7 213.5 377 222 C374.3 230.5 370.0 244.3 366 256 C362.0 267.7 357.2 280.0 353 292 C348.8 304.0 343.7 320.0 341 328 C338.3 336.0 340.3 330.2 337 340 C333.7 349.8 326.8 373.7 321 387 C315.2 400.3 308.0 409.0 302 420 C296.0 431.0 290.7 441.8 285 453 C279.3 464.2 272.8 477.8 268 487 C263.2 496.2 259.5 502.2 256 508 C252.5 513.8 248.8 517.5 247 522 L245 535 L250 537 C252.8 534.5 256.7 528.3 262 520 C267.3 511.7 276.2 498.2 282 487 C287.8 475.8 291.5 464.2 297 453 C302.5 441.8 310.3 428.7 315 420 L325 401 L337 406 C339.7 409.2 340.2 415.8 341 420 L342 431 L351 427 C354.2 427.0 359.0 428.2 361 431 C363.0 433.8 363.0 437.2 363 444 C363.0 450.8 362.2 465.3 361 472 C359.8 478.7 358.8 480.0 356 484 C353.2 488.0 348.0 492.8 344 496 C340.0 499.2 336.3 503.5 332 503 C327.7 502.5 322.7 495.3 318 493 C313.3 490.7 307.8 490.0 304 489 C300.2 488.0 298.6 486.2 295 487 C291.4 487.8 286.1 490.0 282.5 494 C278.9 498.0 276.2 505.5 273.5 511 C270.8 516.5 267.5 520.2 266 527 C264.5 533.8 265.6 545.7 264.4 552 C263.2 558.3 261.1 562.2 259 565 C256.9 567.8 254.2 567.2 252 569 C249.8 570.8 247.9 571.4 246 576 C244.1 580.6 241.3 589.0 240.6 596.5 C239.9 604.0 241.8 610.6 242 621 C242.2 631.4 242.0 649.2 242 659 L242 680 L480 680 L480 95 L366 95 Z"/><g clip-path="url(#cBeach)"><rect x="137" y="108" width="320" height="551" filter="url(#fBeach)"/></g><g clip-path="url(#cSpit)"><rect x="137" y="108" width="320" height="551" filter="url(#fBeach)"/></g><g clip-path="url(#cCT)"><rect x="137" y="108" width="320" height="551" filter="url(#fCoast)"/></g><g clip-path="url(#cYB)"><rect x="137" y="108" width="320" height="551" filter="url(#fYB)"/></g><path fill="#3d8a50" d="M378 335 L480 335 L480 680 L345 680 L345 600 C345.3 580.0 346.8 571.7 347 560 C347.2 548.3 343.8 540.8 346 530 C348.2 519.2 355.3 505.0 360 495 C364.7 485.0 371.3 480.8 374 470 C376.7 459.2 375.0 445.0 376 430 C377.0 415.0 379.7 395.8 380 380 L378 335 Z"/><g clip-path="url(#cLR)"><rect x="137" y="108" width="320" height="551" filter="url(#fLR_lg)"/></g><g clip-path="url(#cLR)"><rect x="137" y="108" width="320" height="551" filter="url(#fLR_bg)"/></g><path fill="#3d8a50" d="M418 95 L480 95 L480 355 L450 345 C440.8 344.5 433.3 352.8 425 352 C416.7 351.2 407.5 341.2 400 340 L380 345 L388 310 C391.3 297.5 396.3 283.3 400 270 C403.7 256.7 407.5 243.3 410 230 C412.5 216.7 413.7 203.3 415 190 C416.3 176.7 417.5 165.8 418 150 L418 95 Z"/><g clip-path="url(#cUR)"><rect x="137" y="108" width="320" height="551" filter="url(#fUR_lg)"/></g><g clip-path="url(#cUR)"><rect x="137" y="108" width="320" height="551" filter="url(#fUR_bg)"/></g><path fill="#3d8a50" d="M270 560 C275.3 555.5 291.3 564.3 300 563 C308.7 561.7 316.2 555.8 322 552 C327.8 548.2 331.2 535.3 335 540 C338.8 544.7 342.8 570.0 345 580 C347.2 590.0 348.0 583.3 348 600 L345 680 L258 680 L262 620 C263.7 605.0 266.7 600.0 268 590 C269.3 580.0 264.7 564.5 270 560 Z"/><g clip-path="url(#cLM)"><rect x="137" y="108" width="320" height="551" filter="url(#fLM_lg)"/></g><g clip-path="url(#cLM)"><rect x="137" y="108" width="320" height="551" filter="url(#fLM_bg)"/></g><path fill="#3d8a50" fill-opacity="1" d="M436 298 C439.2 294.7 442.3 304.7 446 305 C449.7 305.3 456.0 272.5 458 300 C460.0 327.5 459.7 443.0 458 470 C456.3 497.0 451.0 460.7 448 462 C445.0 463.3 442.7 480.0 440 478 C437.3 476.0 433.0 459.7 432 450 C431.0 440.3 434.7 431.7 434 420 C433.3 408.3 428.5 391.7 428 380 C427.5 368.3 431.2 359.2 431 350 C430.8 340.8 426.2 333.7 427 325 C427.8 316.3 432.8 301.3 436 298 Z"/><g clip-path="url(#cStreak)"><rect x="137" y="108" width="320" height="551" filter="url(#fYB)"/></g><path d="M354 313.6 C355.5 317.7 358.9 330.9 363 338 C367.1 345.1 373.9 350.9 378.5 356 C383.1 361.1 386.2 365.4 390.8 368.5 C395.4 371.6 401.5 371.6 406 374.7 C410.5 377.8 414.9 381.3 418 386.9 C421.1 392.4 422.8 400.4 424.4 408 C426.0 415.6 427.4 424.5 427.4 432.7 C427.4 440.9 425.4 449.4 424.4 457 C423.4 464.6 421.8 474.9 421.3 478.5" stroke="#8c98c0" stroke-width="1.6" fill="none"/><g clip-path="url(#cY1)"><rect x="137" y="108" width="320" height="551" filter="url(#fYel)"/></g><g clip-path="url(#cY2)"><rect x="137" y="108" width="320" height="551" filter="url(#fYel)"/></g><g clip-path="url(#cMx3)"><rect x="137" y="108" width="320" height="551" filter="url(#fCoast)"/></g><g clip-path="url(#cY3)"><rect x="137" y="108" width="320" height="551" filter="url(#fYel)"/></g><g clip-path="url(#cLag)"><rect x="137" y="108" width="320" height="551" filter="url(#fLag)"/></g><g clip-path="url(#cTown)"><rect x="137" y="108" width="320" height="551" filter="url(#fTown)"/></g><path fill="#e05048" d="M282.5 494 C286.1 490.0 291.4 487.8 295 487 C298.6 486.2 300.2 488.0 304 489 C307.8 490.0 315.7 491.0 318 493 L318 501 L306 500 C302.0 500.5 297.3 502.3 294 504 C290.7 505.7 288.3 506.7 286 510 C283.7 513.3 281.7 519.0 280 524 L276 540 L266 540 L266 527 C267.2 522.2 270.8 516.5 273.5 511 C276.2 505.5 278.9 498.0 282.5 494 Z"/><path fill="#e05048" d="M332 503 C333.3 501.2 340.0 499.2 344 496 L356 484 L358 488 L348 500 L336 507 L332 503 Z"/><path fill="#e05048" d="M246 576 L252 569 L256 571 L250 582 L246 598 L241 600 L240.6 596.5 C241.4 592.5 244.1 580.6 246 576 Z"/><path fill="#e08a38" d="M280 541 C280.8 539.0 284.8 538.2 286 540 C287.2 541.8 287.5 547.7 287 552 C286.5 556.3 284.3 563.8 283 566 C281.7 568.2 279.3 567.3 279 565 C278.7 562.7 280.8 556.0 281 552 C281.2 548.0 279.2 543.0 280 541 Z"/><g clip-path="url(#cOrc)"><rect x="137" y="108" width="320" height="551" filter="url(#fOr)"/></g><path fill="#60b0d8" d="M292 474 C293.5 471.8 297.5 468.7 300 468 C302.5 467.3 306.0 468.3 307 470 C308.0 471.7 307.5 475.8 306 478 C304.5 480.2 300.5 482.5 298 483 C295.5 483.5 292.0 482.5 291 481 C290.0 479.5 290.5 476.2 292 474 Z"/><path fill="#c8e0f8" d="M294 476 C293.8 474.8 297.5 472.3 299 472 C300.5 471.7 302.8 472.8 303 474 C303.2 475.2 301.5 478.7 300 479 C298.5 479.3 294.2 477.2 294 476 Z"/><path fill="#a8d0b0" d="M300 484 C300.7 483.0 304.7 481.7 306 482 C307.3 482.3 308.7 485.0 308 486 C307.3 487.0 303.3 488.3 302 488 C300.7 487.7 299.3 485.0 300 484 Z"/><path fill="#d8ccb0" d="M236.5 538 L241 539 L234 556 C230.8 562.5 226.0 571.0 222 578 C218.0 585.0 213.0 592.5 210 598 L204 611 L217 625.6 C220.9 630.7 225.3 636.1 227.5 641.7 C229.7 647.3 229.8 652.6 230.4 659 L231 680 L165 680 L172 659 C175.3 651.0 180.4 639.3 185 632 C189.6 624.7 195.1 622.0 199.6 615 C204.1 608.0 207.8 598.8 212 590 C216.2 581.2 220.9 570.7 225 562 L236.5 538 Z"/><path fill="#f8f048" d="M196 618 L204 612 L217 625.6 C220.9 630.6 225.3 636.1 227.5 641.7 C229.7 647.3 229.8 652.6 230.4 659 L231 680 L170 680 L176 659 C178.7 651.7 182.7 642.8 186 636 C189.3 629.2 193.0 622.0 196 618 Z"/><path fill="#f6e0a4" d="M198 616 C200.3 613.2 203.7 612.0 206 613 C208.3 614.0 212.2 618.8 212 622 C211.8 625.2 208.3 630.7 205 632 C201.7 633.3 193.2 632.7 192 630 C190.8 627.3 195.7 618.8 198 616 Z"/><path fill="#f8f048" d="M229 632 C230.3 626.7 233.7 623.7 236 623 C238.3 622.3 241.3 624.3 243 628 C244.7 631.7 245.3 636.3 246 645 L247 680 L226 680 L228 655 C228.5 647.0 227.7 637.3 229 632 Z"/><path fill="#d8ccb0" d="M232 540 C233.7 537.0 239.3 536.3 241 538 C242.7 539.7 242.8 546.3 242 550 C241.2 553.7 237.8 559.0 236 560 C234.2 561.0 231.7 559.3 231 556 C230.3 552.7 230.3 543.0 232 540 Z"/><g clip-path="url(#cUR)"><rect x="137" y="108" width="320" height="551" filter="url(#fPu2)"/></g><g clip-path="url(#cLR)"><rect x="137" y="108" width="320" height="551" filter="url(#fPu)"/></g></svg></div>
<div class="a" style="left:2px;top:112px;width:107px;height:1px;background:#ffffff"></div>
<div class="a" style="left:2px;top:113px;width:107px;height:1px;background:#808080"></div>
<div class="a" style="left:2px;top:116px;width:107px;height:1px;background:#ffffff"></div>
<div class="a" style="left:2px;top:117px;width:107px;height:1px;background:#808080"></div>
<div class="a" style="left:111px;top:110px;width:8px;height:11px;border-top:1px solid #ffffff;border-left:1px solid #ffffff;border-right:1px solid #808080;border-bottom:1px solid #808080"></div>
<div class="a t" style="left:113.00px;top:111.03px;font-size:10px;line-height:10px;color:#000;font-weight:bold;transform:scaleX(0.809);">x</div>
<div class="a" style="left:3px;top:127px;width:111px;height:523px;background:#fff;border-top:2px solid #404040;border-left:1px solid #808080;border-right:1px solid #ffffff;border-bottom:1px solid #ffffff;box-shadow:inset 1px 0 0 #404040"></div>
<div class="a" style="left:7px;top:134px;width:5px;height:7px;border:1px solid #808080;background:#fff"></div>
<div class="a" style="left:8px;top:137px;width:3px;height:1px;background:#000"></div>
<svg class="a" style="left:15px;top:130px" width="10" height="12" viewBox="0 0 10 12" preserveAspectRatio="none"><path d="M1 3 L6 1 L9 2.5 L4 4.5 Z M1 6.5 L6 4.5 L9 6 L4 8 Z M1 10 L6 8 L9 9.5 L4 11.5 Z" fill="#f0f020" stroke="#303000" stroke-width=".8"/></svg>
<div class="a" style="left:26px;top:129px;width:23px;height:15px;background:#0a246a"></div>
<div class="a t" style="left:26.50px;top:131.69px;font-size:11px;line-height:11px;color:#fff;transform:scaleX(0.666);">Layers</div>
<div class="a" style="left:18px;top:150px;width:5px;height:7px;border:1px solid #a0a0a0;background:#fff"></div>
<div class="a" style="left:19px;top:153px;width:3px;height:1px;background:#808080"></div>
<div class="a" style="left:27px;top:147px;width:7px;height:11px;border:1px solid #404040;background:#fff"></div>
<svg class="a" style="left:28px;top:149px" width="5" height="7" viewBox="0 0 5 7" preserveAspectRatio="none"><path d="M0.5 3.5 L2 5.5 L4.5 0.5" stroke="#000" stroke-width="1.3" fill="none"/></svg>
<div class="a t" style="left:36.70px;top:147.19px;font-size:11px;line-height:11px;color:#000;transform:scaleX(0.545);">nlcd</div>
<div class="a" style="left:37px;top:163px;width:8px;height:10px;background:#000000;border:1px solid #808080"></div>
<div class="a t" style="left:46.70px;top:163.09px;font-size:11px;line-height:11px;color:#000;transform:scaleX(0.571);">0</div>
<div class="a" style="left:37px;top:178px;width:8px;height:10px;background:#6e80b2;border:1px solid #808080"></div>
<div class="a t" style="left:46.70px;top:178.09px;font-size:11px;line-height:11px;color:#000;transform:scaleX(0.595);">11</div>
<div class="a" style="left:37px;top:194px;width:8px;height:10px;background:#ffffff;border:1px solid #808080"></div>
<div class="a t" style="left:46.70px;top:194.09px;font-size:11px;line-height:11px;color:#000;transform:scaleX(0.555);">12</div>
<div class="a" style="left:37px;top:210px;width:8px;height:10px;background:#fde0e0;border:1px solid #808080"></div>
<div class="a t" style="left:46.70px;top:210.09px;font-size:11px;line-height:11px;color:#000;transform:scaleX(0.555);">21</div>
<div class="a" style="left:37px;top:225px;width:8px;height:10px;background:#f8b0a0;border:1px solid #808080"></div>
<div class="a t" style="left:46.70px;top:225.09px;font-size:11px;line-height:11px;color:#000;transform:scaleX(0.555);">22</div>
<div class="a" style="left:37px;top:241px;width:8px;height:10px;background:#e05048;border:1px solid #808080"></div>
<div class="a t" style="left:46.70px;top:241.09px;font-size:11px;line-height:11px;color:#000;transform:scaleX(0.555);">23</div>
<div class="a" style="left:37px;top:257px;width:8px;height:10px;background:#d8d0c0;border:1px solid #808080"></div>
<div class="a t" style="left:46.70px;top:257.09px;font-size:11px;line-height:11px;color:#000;transform:scaleX(0.555);">31</div>
<div class="a" style="left:37px;top:272px;width:8px;height:10px;background:#a8a8a8;border:1px solid #808080"></div>
<div class="a t" style="left:46.70px;top:272.09px;font-size:11px;line-height:11px;color:#000;transform:scaleX(0.555);">32</div>
<div class="a" style="left:37px;top:288px;width:8px;height:10px;background:#5c3c8c;border:1px solid #808080"></div>
<div class="a t" style="left:46.70px;top:288.09px;font-size:11px;line-height:11px;color:#000;transform:scaleX(0.555);">33</div>
<div class="a" style="left:37px;top:303px;width:8px;height:10px;background:#78c078;border:1px solid #808080"></div>
<div class="a t" style="left:46.70px;top:303.09px;font-size:11px;line-height:11px;color:#000;transform:scaleX(0.555);">41</div>
<div class="a" style="left:37px;top:319px;width:8px;height:10px;background:#3d8a50;border:1px solid #808080"></div>
<div class="a t" style="left:46.70px;top:319.09px;font-size:11px;line-height:11px;color:#000;transform:scaleX(0.555);">42</div>
<div class="a" style="left:37px;top:335px;width:8px;height:10px;background:#c8e8a8;border:1px solid #808080"></div>
<div class="a t" style="left:46.70px;top:335.09px;font-size:11px;line-height:11px;color:#000;transform:scaleX(0.555);">43</div>
<div class="a" style="left:37px;top:350px;width:8px;height:10px;background:#dcc890;border:1px solid #808080"></div>
<div class="a t" style="left:46.70px;top:350.09px;font-size:11px;line-height:11px;color:#000;transform:scaleX(0.555);">51</div>
<div class="a" style="left:37px;top:366px;width:8px;height:10px;background:#b8ac78;border:1px solid #808080"></div>
<div class="a t" style="left:46.70px;top:366.09px;font-size:11px;line-height:11px;color:#000;transform:scaleX(0.555);">61</div>
<div class="a" style="left:37px;top:382px;width:8px;height:10px;background:#fde8a8;border:1px solid #808080"></div>
<div class="a t" style="left:46.70px;top:382.09px;font-size:11px;line-height:11px;color:#000;transform:scaleX(0.555);">71</div>
<div class="a" style="left:37px;top:397px;width:8px;height:10px;background:#f8f040;border:1px solid #808080"></div>
<div class="a t" style="left:46.70px;top:397.09px;font-size:11px;line-height:11px;color:#000;transform:scaleX(0.555);">81</div>
<div class="a" style="left:37px;top:413px;width:8px;height:10px;background:#d09040;border:1px solid #808080"></div>
<div class="a t" style="left:46.70px;top:413.09px;font-size:11px;line-height:11px;color:#000;transform:scaleX(0.555);">82</div>
<div class="a" style="left:37px;top:429px;width:8px;height:10px;background:#706040;border:1px solid #808080"></div>
<div class="a t" style="left:46.70px;top:429.09px;font-size:11px;line-height:11px;color:#000;transform:scaleX(0.555);">83</div>
<div class="a" style="left:37px;top:444px;width:8px;height:10px;background:#f09030;border:1px solid #808080"></div>
<div class="a t" style="left:46.70px;top:444.09px;font-size:11px;line-height:11px;color:#000;transform:scaleX(0.555);">85</div>
<div class="a" style="left:37px;top:460px;width:8px;height:10px;background:#c8e0f8;border:1px solid #808080"></div>
<div class="a t" style="left:46.70px;top:460.09px;font-size:11px;line-height:11px;color:#000;transform:scaleX(0.555);">91</div>
<div class="a" style="left:37px;top:475px;width:8px;height:10px;background:#60b0d8;border:1px solid #808080"></div>
<div class="a t" style="left:46.70px;top:475.09px;font-size:11px;line-height:11px;color:#000;transform:scaleX(0.555);">92</div>
<div class="a" style="left:3px;top:652px;width:25px;height:20px;background:#d4d0c8;border-left:1px solid #ffffff;border-right:1px solid #404040;border-bottom:1px solid #404040;box-shadow:-0px 0 0 #000"></div>
<div class="a t" style="left:5.50px;top:657.69px;font-size:11px;line-height:11px;color:#000;transform:scaleX(0.582);">Display</div>
<div class="a" style="left:29px;top:652px;width:24px;height:18px;background:#d4d0c8;border-left:1px solid #ffffff;border-right:1px solid #404040;border-bottom:1px solid #404040;border-top:1px solid #808080"></div>
<div class="a t" style="left:31.00px;top:655.69px;font-size:11px;line-height:11px;color:#000;transform:scaleX(0.559);">Source</div>
<div class="a" style="left:54px;top:652px;width:30px;height:18px;background:#d4d0c8;border-left:1px solid #ffffff;border-right:1px solid #404040;border-bottom:1px solid #404040;border-top:1px solid #808080"></div>
<div class="a t" style="left:56.00px;top:655.69px;font-size:11px;line-height:11px;color:#000;transform:scaleX(0.574);">Selection</div>
<div class="a" style="left:0px;top:675px;width:137px;height:1px;background:#808080"></div>
<div class="a" style="left:0px;top:677px;width:536px;height:1px;background:#ffffff"></div>
<div class="a" style="left:117px;top:107px;width:1px;height:568px;background:#808080"></div>
<div class="a" style="left:118px;top:107px;width:1px;height:568px;background:#b0b0b0"></div>
<div class="a" style="left:119px;top:107px;width:1px;height:568px;background:#ffffff"></div>
<div class="a" style="left:121px;top:110px;width:14px;height:1px;background:#ffffff"></div>
<div class="a" style="left:121px;top:111px;width:14px;height:1px;background:#808080"></div>
<div class="a" style="left:121px;top:116px;width:15px;height:23px;background:#e8e6e2;border-top:1px solid #ffffff;border-left:1px solid #ffffff;border-right:1px solid #808080;border-bottom:1px solid #808080"></div>
<svg class="a" style="left:123px;top:120px" width="11" height="16" viewBox="0 0 11 16" preserveAspectRatio="none"><ellipse cx="5" cy="6" rx="4.2" ry="5.2" fill="#e8e8e8" stroke="#000" stroke-width="1.1"/><path d="M7.5 11 L10 15" stroke="#d01010" stroke-width="2.2"/><path d="M3 6 H7" stroke="#000" stroke-width="1.4"/><path d="M5 4 V8" stroke="#000" stroke-width="1.4"/></svg>
<svg class="a" style="left:123px;top:142px" width="11" height="16" viewBox="0 0 11 16" preserveAspectRatio="none"><ellipse cx="5" cy="6" rx="4.2" ry="5.2" fill="#e8e8e8" stroke="#000" stroke-width="1.1"/><path d="M7.5 11 L10 15" stroke="#d01010" stroke-width="2.2"/><path d="M3 6 H7" stroke="#000" stroke-width="1.4"/></svg>
<svg class="a" style="left:123px;top:167px" width="10" height="13" viewBox="0 0 10 13" preserveAspectRatio="none"><path d="M1 1 L3 3 M9 1 L7 3 M1 12 L3 10 M9 12 L7 10 M1 1 V3 M9 1 V3 M1 12 V10 M9 12 V10" stroke="#000" stroke-width="1.6"/></svg>
<svg class="a" style="left:123px;top:189px" width="10" height="13" viewBox="0 0 10 13" preserveAspectRatio="none"><path d="M2 3 L0 1 M8 3 L10 1 M2 10 L0 12 M8 10 L10 12 M2 3 V1 M8 3 V1 M2 10 V12 M8 10 V12" stroke="#000" stroke-width="1.6"/></svg>
<svg class="a" style="left:122px;top:210px" width="12" height="16" viewBox="0 0 12 16" preserveAspectRatio="none"><path d="M2 8 V4 Q2 3 3 3 Q4 3 4 4 V2 Q4 1 5 1 Q6 1 6 2 V2.5 Q6 1.5 7 1.5 Q8 1.5 8 2.5 V4 Q8 3 9 3 Q10 3 10 4 V10 Q10 15 6 15 Q3 15 1.5 11 L0.5 8 Q0.5 7 1.5 7 Z" fill="#fff" stroke="#000" stroke-width=".9"/></svg>
<svg class="a" style="left:122px;top:232px" width="12" height="16" viewBox="0 0 12 16" preserveAspectRatio="none"><ellipse cx="6" cy="8" rx="5.5" ry="7.5" fill="#1040c0" stroke="#000" stroke-width=".6"/><path d="M3 3 Q6 4 5 8 Q3 11 4 14 M7 2 Q10 5 8 7 Q10 10 9 13" stroke="#20a040" stroke-width="2.4" fill="none"/></svg>
<svg class="a" style="left:122px;top:255px" width="12" height="14" viewBox="0 0 12 14" preserveAspectRatio="none"><path d="M0.5 7 L6 1 V4.5 H11.5 V9.5 H6 V13 Z" fill="#0040f0" stroke="#000080" stroke-width=".6"/></svg>
<svg class="a" style="left:122px;top:277px" width="12" height="14" viewBox="0 0 12 14" preserveAspectRatio="none"><path d="M11.5 7 L6 1 V4.5 H0.5 V9.5 H6 V13 Z" fill="#a8a8a8" stroke="#909090" stroke-width=".6"/></svg>
<svg class="a" style="left:122px;top:297px" width="12" height="15" viewBox="0 0 12 15" preserveAspectRatio="none"><path d="M1 1 L8 6 L5 7 L8 13 L6 14 L3 8 L1 10 Z" fill="#c0c0c0" stroke="#909090" stroke-width=".7"/><rect x="6" y="1" width="5" height="5" fill="none" stroke="#909090" stroke-width=".7"/></svg>
<svg class="a" style="left:123px;top:323px" width="10" height="14" viewBox="0 0 10 14" preserveAspectRatio="none"><rect x="0.5" y="0.5" width="9" height="13" fill="#e0e0e0" stroke="#a0a0a0"/><rect x="3" y="4" width="4" height="5" fill="none" stroke="#a0a0a0"/></svg>
<svg class="a" style="left:122px;top:343px" width="12" height="16" viewBox="0 0 12 16" preserveAspectRatio="none"><rect x="4.5" y="0.5" width="7" height="10" fill="#e0e0e0" stroke="#a0a0a0"/><path d="M1 4 L6 9 L4 10 L6 14 L4.5 15 L2.5 11 L1 12 Z" fill="#c0c0c0" stroke="#909090" stroke-width=".6"/></svg>
<svg class="a" style="left:123px;top:368px" width="10" height="15" viewBox="0 0 10 15" preserveAspectRatio="none"><path d="M1 0.5 V12 L3.5 9.5 L5.5 14.5 L7.5 13.5 L5.5 8.5 H9 Z" fill="#000"/></svg>
<svg class="a" style="left:122px;top:391px" width="12" height="14" viewBox="0 0 12 14" preserveAspectRatio="none"><ellipse cx="6" cy="7" rx="5.6" ry="6.6" fill="#102090"/><rect x="5" y="6" width="2" height="5" fill="#fff"/><rect x="5" y="3" width="2" height="2" fill="#fff"/></svg>
<svg class="a" style="left:122px;top:414px" width="12" height="14" viewBox="0 0 12 14" preserveAspectRatio="none"><path d="M1 6 L3 1 H5 V6 M11 6 L9 1 H7 V6" stroke="#000" stroke-width="1.5" fill="none"/><ellipse cx="3" cy="10" rx="2.6" ry="3.5" fill="#000"/><ellipse cx="9" cy="10" rx="2.6" ry="3.5" fill="#000"/></svg>
<svg class="a" style="left:122px;top:436px" width="12" height="15" viewBox="0 0 12 15" preserveAspectRatio="none"><path d="M1 10 H11 M1 13 H11 M6 2 V9 M4 4 L6 2 L8 4" stroke="#000" stroke-width="1.2" fill="none"/><text x="6" y="6" font-size="6" font-family="Liberation Sans">2</text></svg>
<svg class="a" style="left:123px;top:457px" width="10" height="15" viewBox="0 0 10 15" preserveAspectRatio="none"><path d="M8 0.5 L2 8 H5 L2 14.5 L8 6 H5 Z" fill="#606060" stroke="#303030" stroke-width=".6"/></svg>
<div class="a" style="left:136px;top:107px;width:1px;height:568px;background:#808080"></div>
<div class="a" style="left:137px;top:659px;width:399px;height:16px;background:#d4d0c8"></div>
<div class="a" style="left:137px;top:659px;width:318px;height:1px;background:#d4d0c8"></div>
<svg class="a" style="left:139px;top:663px" width="7" height="9" viewBox="0 0 7 9" preserveAspectRatio="none"><ellipse cx="3.5" cy="4.5" rx="3.3" ry="4.3" fill="#1040c0"/><path d="M2 1.5 Q4 3 2.5 6" stroke="#20a040" stroke-width="1.5" fill="none"/></svg>
<svg class="a" style="left:148px;top:662px" width="6" height="10" viewBox="0 0 6 10" preserveAspectRatio="none"><path d="M0.5 0.5 H4 L5.5 2 V9.5 H0.5 Z" fill="#fff" stroke="#000"/></svg>
<div class="a" style="left:157px;top:661px;width:1px;height:13px;background:#808080"></div>
<div class="a" style="left:158px;top:661px;width:1px;height:13px;background:#ffffff"></div>
<svg class="a" style="left:161px;top:663px" width="6" height="9" viewBox="0 0 6 9" preserveAspectRatio="none"><path d="M1 4 Q1 1 3.5 1 Q5.5 1 5.5 3 M5 5 Q5 8 2.5 8 Q0.5 8 0.5 6" stroke="#000" stroke-width="1.2" fill="none"/></svg>
<div class="a" style="left:169px;top:660px;width:9px;height:15px;background:#d4d0c8;border-top:1px solid #ffffff;border-left:1px solid #ffffff;border-right:1px solid #404040;border-bottom:1px solid #404040"></div>
<svg class="a" style="left:171px;top:664px" width="4" height="7" viewBox="0 0 4 7" preserveAspectRatio="none"><path d="M3.5 0 V7 L0 3.5 Z" fill="#000"/></svg>
<div class="a" style="left:178px;top:660px;width:277px;height:15px;background:#ebe9e5"></div>
<div class="a" style="left:209px;top:660px;width:39px;height:15px;background:#d4d0c8;border-top:1px solid #ffffff;border-left:1px solid #ffffff;border-right:1px solid #404040;border-bottom:1px solid #404040"></div>
<div class="a" style="left:1px;top:680px;width:3px;height:21px;border-left:1px solid #ffffff;border-top:1px solid #ffffff;border-right:1px solid #808080;border-bottom:1px solid #808080"></div>
<div class="a t" style="left:5.90px;top:685.69px;font-size:11px;line-height:11px;color:#000;transform:scaleX(0.545);">Drawing</div>
<svg class="a" style="left:31.8px;top:688.5px" width="6" height="4" viewBox="0 0 6 4" preserveAspectRatio="none"><path d="M0 0 L6 0 L3.0 4 Z" fill="#000"/></svg>
<svg class="a" style="left:46px;top:683px" width="7" height="14" viewBox="0 0 7 14" preserveAspectRatio="none"><path d="M0.5 0.5 V11 L2.5 9 L4.5 13.5 L6 12.8 L4 8.5 H6.5 Z" fill="#000"/></svg>
<svg class="a" style="left:57px;top:682px" width="9" height="14" viewBox="0 0 9 14" preserveAspectRatio="none"><ellipse cx="4.5" cy="7" rx="4" ry="6" fill="none" stroke="#a0a0a0"/><path d="M4.5 4 V9" stroke="#a0a0a0"/></svg>
<svg class="a" style="left:70px;top:682px" width="9" height="15" viewBox="0 0 9 15" preserveAspectRatio="none"><rect x="3.5" y="0.5" width="5" height="8" fill="#e8e8e8" stroke="#a0a0a0"/><path d="M0.5 5 Q0.5 13 6 13" stroke="#a0a0a0" fill="none"/></svg>
<div class="a" style="left:83px;top:680px;width:1px;height:21px;background:#808080"></div>
<div class="a" style="left:84px;top:680px;width:1px;height:21px;background:#ffffff"></div>
<svg class="a" style="left:88px;top:683px" width="8" height="13" viewBox="0 0 8 13" preserveAspectRatio="none"><rect x="0.5" y="0.5" width="7" height="12" fill="#fff" stroke="#000"/></svg>
<svg class="a" style="left:100.5px;top:688px" width="6" height="4" viewBox="0 0 6 4" preserveAspectRatio="none"><path d="M0 0 L6 0 L3.0 4 Z" fill="#000"/></svg>
<div class="a" style="left:108px;top:679px;width:14px;height:21px;background:#d4d0c8;border-top:1px solid #ffffff;border-left:1px solid #ffffff;border-right:1px solid #808080;border-bottom:1px solid #808080"></div>
<svg class="a" style="left:110px;top:682px" width="10" height="14" viewBox="0 0 10 14" preserveAspectRatio="none"><path d="M0 13.5 H3.5 M6.5 13.5 H10 M2 13 L5 1 L8 13 M3 9 H7" stroke="#000" stroke-width="1.6" fill="none"/></svg>
<div class="a" style="left:122px;top:679px;width:8px;height:21px;border-top:1px solid #ffffff;border-left:1px solid #ffffff;border-right:1px solid #808080;border-bottom:1px solid #808080"></div>
<svg class="a" style="left:123.5px;top:688px" width="6" height="4" viewBox="0 0 6 4" preserveAspectRatio="none"><path d="M0 0 L6 0 L3.0 4 Z" fill="#000"/></svg>
<svg class="a" style="left:134px;top:682px" width="10" height="14" viewBox="0 0 10 14" preserveAspectRatio="none"><path d="M1 2 L9 1 L9 13 L1 12 Z M2 3 L8 11" stroke="#a0a0a0" fill="none"/></svg>
<div class="a" style="left:146px;top:680px;width:1px;height:21px;background:#808080"></div>
<div class="a" style="left:147px;top:680px;width:1px;height:21px;background:#ffffff"></div>
<div class="a" style="left:149px;top:679px;width:94px;height:19px;background:#fff;border-top:1px solid #808080;border-left:1px solid #808080;border-right:1px solid #ffffff;border-bottom:1px solid #ffffff;box-shadow:inset 1px 1px 0 #404040"></div>
<div class="a" style="left:151px;top:681px;width:8px;height:15px;background:#d8e4f8;border:1px solid #8090c0"></div>
<svg class="a" style="left:152px;top:683px" width="6" height="11" viewBox="0 0 6 11" preserveAspectRatio="none"><ellipse cx="3" cy="5.5" rx="2" ry="4.3" fill="none" stroke="#108020" stroke-width="1.5" transform="skewX(-12)"/></svg>
<div class="a t" style="left:161.00px;top:685.19px;font-size:11px;line-height:11px;color:#000;transform:scaleX(0.568);">Arial</div>
<div class="a" style="left:234px;top:681px;width:9px;height:15px;background:#d4d0c8;border-top:1px solid #ffffff;border-left:1px solid #ffffff;border-right:1px solid #808080;border-bottom:1px solid #808080"></div>
<div class="a" style="left:234px;top:681px;width:9px;height:15px;box-shadow:inset -1px -1px 0 #404040"></div>
<svg class="a" style="left:236px;top:687.5px" width="6" height="4" viewBox="0 0 6 4" preserveAspectRatio="none"><path d="M0 0 L6 0 L3.0 4 Z" fill="#000"/></svg>
<div class="a" style="left:247px;top:679px;width:23px;height:19px;background:#fff;border-top:1px solid #808080;border-left:1px solid #808080;border-right:1px solid #ffffff;border-bottom:1px solid #ffffff;box-shadow:inset 1px 1px 0 #404040"></div>
<div class="a t" style="left:249.00px;top:685.19px;font-size:11px;line-height:11px;color:#000;transform:scaleX(0.490);">10</div>
<div class="a" style="left:262px;top:681px;width:8px;height:15px;background:#d4d0c8;border-top:1px solid #ffffff;border-left:1px solid #ffffff;border-right:1px solid #808080;border-bottom:1px solid #808080"></div>
<div class="a" style="left:262px;top:681px;width:8px;height:15px;box-shadow:inset -1px -1px 0 #404040"></div>
<svg class="a" style="left:263.5px;top:687.5px" width="6" height="4" viewBox="0 0 6 4" preserveAspectRatio="none"><path d="M0 0 L6 0 L3.0 4 Z" fill="#000"/></svg>
<div class="a t" style="left:278.00px;top:684.84px;font-size:12px;line-height:12px;color:#000;font-weight:bold;transform:scaleX(0.807);font-family:"Liberation Serif",serif;">B</div>
<div class="a t" style="left:291.70px;top:684.84px;font-size:12px;line-height:12px;color:#000;transform:scaleX(1.592);font-family:"Liberation Serif",serif;font-style:italic;">I</div>
<div class="a t" style="left:305.00px;top:684.84px;font-size:12px;line-height:12px;color:#000;transform:scaleX(0.634);font-family:"Liberation Serif",serif;">U</div>
<div class="a" style="left:305px;top:697px;width:6px;height:1px;background:#000"></div>
<div class="a" style="left:315px;top:680px;width:1px;height:21px;background:#808080"></div>
<div class="a" style="left:316px;top:680px;width:1px;height:21px;background:#ffffff"></div>
<div class="a t" style="left:320.00px;top:683.00px;font-size:13px;line-height:13px;color:#000;transform:scaleX(1.211);font-family:"Liberation Serif",serif;">A</div>
<div class="a" style="left:320px;top:695px;width:11px;height:3px;background:#000"></div>
<svg class="a" style="left:333px;top:688px" width="5" height="4" viewBox="0 0 5 4" preserveAspectRatio="none"><path d="M0 0 L5 0 L2.5 4 Z" fill="#000"/></svg>
<svg class="a" style="left:344px;top:682px" width="11" height="16" viewBox="0 0 11 16" preserveAspectRatio="none"><path d="M2 9 L6 3 L9 7 L5 11 Z" fill="#fff" stroke="#000" stroke-width=".8"/><path d="M6 1 Q8 2 7 6" stroke="#1030a0" stroke-width="1.4" fill="none"/></svg>
<div class="a" style="left:344px;top:697px;width:11px;height:3px;background:#f8f8c0"></div>
<svg class="a" style="left:357px;top:688px" width="5" height="4" viewBox="0 0 5 4" preserveAspectRatio="none"><path d="M0 0 L5 0 L2.5 4 Z" fill="#000"/></svg>
<svg class="a" style="left:368px;top:682px" width="10" height="14" viewBox="0 0 10 14" preserveAspectRatio="none"><path d="M2 11 Q4 12 6 8 L9 1" stroke="#1030c0" stroke-width="2" fill="none"/><path d="M7 4 L9 1" stroke="#e0c000" stroke-width="2"/></svg>
<div class="a" style="left:367px;top:695px;width:11px;height:3px;background:#000"></div>
<svg class="a" style="left:381.5px;top:688px" width="5" height="4" viewBox="0 0 5 4" preserveAspectRatio="none"><path d="M0 0 L5 0 L2.5 4 Z" fill="#000"/></svg>
<svg class="a" style="left:393px;top:684px" width="6" height="8" viewBox="0 0 6 8" preserveAspectRatio="none"><ellipse cx="3" cy="4" rx="2" ry="3" fill="#1020c0"/></svg>
<div class="a" style="left:391px;top:695px;width:11px;height:3px;background:#000"></div>
<svg class="a" style="left:404.3px;top:688px" width="5" height="4" viewBox="0 0 5 4" preserveAspectRatio="none"><path d="M0 0 L5 0 L2.5 4 Z" fill="#000"/></svg>
<div class="a" style="left:416px;top:678px;width:1px;height:26px;background:#808080"></div>
<div class="a" style="left:417px;top:678px;width:1px;height:26px;background:#ffffff"></div>
<div class="a" style="left:0px;top:703px;width:536px;height:1px;background:#808080"></div>
<div class="a" style="left:0px;top:705px;width:536px;height:1px;background:#ffffff"></div>
<div class="a" style="left:378px;top:707px;width:13px;height:13px;background:#d4d0c8;border-top:1px solid #808080;border-left:1px solid #808080;border-right:1px solid #ffffff;border-bottom:1px solid #ffffff"></div>
<div class="a" style="left:391px;top:707px;width:89px;height:13px;background:#d4d0c8;border-top:1px solid #808080;border-left:1px solid #808080;border-right:1px solid #ffffff;border-bottom:1px solid #ffffff"></div>
<div class="a t" style="left:392.00px;top:709.69px;font-size:11px;line-height:11px;color:#000;transform:scaleX(0.569);">-2301130.71 2350464.24 Unkn</div>
<div class="a" style="left:480px;top:707px;width:56px;height:13px;background:#d4d0c8;border-top:1px solid #808080;border-left:1px solid #808080;border-right:1px solid #ffffff;border-bottom:1px solid #ffffff"></div>
</div>
<div id="shr" class="a"></div>
<div id="shb" class="a"></div>
<div id="doc" class="a">
<svg class="a" style="left:0;top:0" width="432" height="688"><path d="M75 94.70 L77.5 91.70 L80.0 94.70 L82.5 91.70 L85.0 94.70 L87.5 91.70 L90.0 94.70 L92.5 91.70 L95.0 94.70 L97.5 91.70 L100.0 94.70 L102.5 91.70 L105.0 94.70 L107.5 91.70 L110.0 94.70 L112.5 91.70 L115.0 94.70 L117.5 91.70 L120.0 94.70 L122.5 91.70 L125.0 94.70 L127.5 91.70 L130.0 94.70 L132.5 91.70 L135.0 94.70 L137.5 91.70 L140.0 94.70 L142.5 91.70 L145.0 94.70 L147.5 91.70 L150.0 94.70 L152.5 91.70 L155.0 94.70 L157.5 91.70 L160.0 94.70 L162.5 91.70 L165.0 94.70 L167.5 91.70 L170.0 94.70 L172.5 91.70 L175.0 94.70 L177.5 91.70 L180.0 94.70 L182.5 91.70 L185.0 94.70 L187.5 91.70 L190.0 94.70 L192.5 91.70 L195.0 94.70 L197.5 91.70 L200.0 94.70 L202.5 91.70 L205.0 94.70 M75 113.52 L77.5 110.52 L80.0 113.52 L82.5 110.52 L85.0 113.52 L87.5 110.52 L90.0 113.52 L92.5 110.52 L95.0 113.52 L97.5 110.52 L100.0 113.52 L102.5 110.52 L105.0 113.52 L107.5 110.52 L110.0 113.52 L112.5 110.52 L115.0 113.52 L117.5 110.52 L120.0 113.52 L122.5 110.52 L125.0 113.52 L127.5 110.52 L130.0 113.52 L132.5 110.52 L135.0 113.52 L137.5 110.52 L140.0 113.52 L142.5 110.52 L145.0 113.52 L147.5 110.52 L150.0 113.52 L152.5 110.52 L155.0 113.52 L157.5 110.52 L160.0 113.52 L162.5 110.52 L165.0 113.52 L167.5 110.52 L170.0 113.52 L172.5 110.52 L175.0 113.52 L177.5 110.52 L180.0 113.52 L182.5 110.52 L185.0 113.52 L187.5 110.52 L190.0 113.52 L192.5 110.52 L195.0 113.52 L197.5 110.52 L200.0 113.52 L202.5 110.52 L205.0 113.52 L207.5 110.52 L210.0 113.52 L212.5 110.52 L215.0 113.52 L217.5 110.52 L220.0 113.52 L222.5 110.52 L225.0 113.52 L227.5 110.52 L230.0 113.52 L232.5 110.52 L235.0 113.52 L237.5 110.52 L240.0 113.52 L242.5 110.52 L245.0 113.52 L247.5 110.52 L250.0 113.52 L252.5 110.52 L255.0 113.52 L257.5 110.52 L260.0 113.52 L262.5 110.52 L265.0 113.52 L267.5 110.52 L270.0 113.52 L272.5 110.52 L275.0 113.52 L277.5 110.52 L280.0 113.52 L282.5 110.52 L285.0 113.52 M75 169.98 L77.5 166.98 L80.0 169.98 L82.5 166.98 L85.0 169.98 L87.5 166.98 L90.0 169.98 L92.5 166.98 L95.0 169.98 L97.5 166.98 L100.0 169.98 L102.5 166.98 L105.0 169.98 L107.5 166.98 L110.0 169.98 L112.5 166.98 L115.0 169.98 L117.5 166.98 L120.0 169.98 L122.5 166.98 L125.0 169.98 L127.5 166.98 L130.0 169.98 L132.5 166.98 L135.0 169.98 L137.5 166.98 L140.0 169.98 L142.5 166.98 L145.0 169.98 L147.5 166.98 L150.0 169.98 L152.5 166.98 L155.0 169.98 L157.5 166.98 L160.0 169.98 L162.5 166.98 L165.0 169.98 L167.5 166.98 L170.0 169.98 L172.5 166.98 L175.0 169.98 L177.5 166.98 L180.0 169.98 L182.5 166.98 L185.0 169.98 L187.5 166.98 L190.0 169.98 L192.5 166.98 L195.0 169.98 L197.5 166.98 L200.0 169.98 L202.5 166.98 L205.0 169.98 L207.5 166.98 L210.0 169.98 L212.5 166.98 L215.0 169.98 L217.5 166.98 L220.0 169.98 L222.5 166.98 L225.0 169.98 L227.5 166.98 L230.0 169.98 L232.5 166.98 L235.0 169.98 L237.5 166.98 L240.0 169.98 L242.5 166.98 L245.0 169.98 L247.5 166.98 L250.0 169.98 L252.5 166.98 L255.0 169.98 L257.5 166.98 L260.0 169.98 L262.5 166.98 L265.0 169.98 L267.5 166.98 L270.0 169.98 L272.5 166.98 L275.0 169.98 L277.5 166.98 L280.0 169.98 L282.5 166.98 L285.0 169.98 L287.5 166.98 L290.0 169.98 L292.5 166.98 L295.0 169.98 L297.5 166.98 L300.0 169.98 L302.5 166.98 L305.0 169.98 L307.5 166.98 L310.0 169.98 L312.5 166.98 L315.0 169.98 L317.5 166.98 L320.0 169.98 L322.5 166.98 L325.0 169.98 L327.5 166.98 L330.0 169.98 L332.5 166.98 L335.0 169.98 L337.5 166.98 L340.0 169.98 L342.5 166.98 L345.0 169.98 L347.5 166.98 L350.0 169.98 L352.5 166.98 L355.0 169.98 M75 188.80 L77.5 185.80 L80.0 188.80 L82.5 185.80 L85.0 188.80 L87.5 185.80 L90.0 188.80 L92.5 185.80 L95.0 188.80 L97.5 185.80 L100.0 188.80 L102.5 185.80 L105.0 188.80 L107.5 185.80 L110.0 188.80 L112.5 185.80 L115.0 188.80 L117.5 185.80 L120.0 188.80 L122.5 185.80 L125.0 188.80 L127.5 185.80 L130.0 188.80 L132.5 185.80 L135.0 188.80 L137.5 185.80 L140.0 188.80 L142.5 185.80 L145.0 188.80 L147.5 185.80 L150.0 188.80 L152.5 185.80 L155.0 188.80 L157.5 185.80 L160.0 188.80 L162.5 185.80 L165.0 188.80 L167.5 185.80 L170.0 188.80 L172.5 185.80 L175.0 188.80 L177.5 185.80 L180.0 188.80 L182.5 185.80 L185.0 188.80 L187.5 185.80 L190.0 188.80 L192.5 185.80 L195.0 188.80 L197.5 185.80 L200.0 188.80 L202.5 185.80 L205.0 188.80 L207.5 185.80 L210.0 188.80 L212.5 185.80 L215.0 188.80 L217.5 185.80 L220.0 188.80 L222.5 185.80 L225.0 188.80 L227.5 185.80 L230.0 188.80 L232.5 185.80 L235.0 188.80 L237.5 185.80 L240.0 188.80 L242.5 185.80 L245.0 188.80 L247.5 185.80 L250.0 188.80 L252.5 185.80 L255.0 188.80 L257.5 185.80 L260.0 188.80 L262.5 185.80 L265.0 188.80 L267.5 185.80 L270.0 188.80 L272.5 185.80 L275.0 188.80 L277.5 185.80 L280.0 188.80 L282.5 185.80 L285.0 188.80 L287.5 185.80 L290.0 188.80 L292.5 185.80 L295.0 188.80 L297.5 185.80 L300.0 188.80 L302.5 185.80 L305.0 188.80 L307.5 185.80 L310.0 188.80 L312.5 185.80 L315.0 188.80 L317.5 185.80 L320.0 188.80 L322.5 185.80 L325.0 188.80 L327.5 185.80 L330.0 188.80 L332.5 185.80 L335.0 188.80 L337.5 185.80 L340.0 188.80 L342.5 185.80 L345.0 188.80 L347.5 185.80 L350.0 188.80 L352.5 185.80 L355.0 188.80 L357.5 185.80 L360.0 188.80 L362.5 185.80 L365.0 188.80 M75 207.62 L77.5 204.62 L80.0 207.62 L82.5 204.62 L85.0 207.62 L87.5 204.62 L90.0 207.62 L92.5 204.62 L95.0 207.62 L97.5 204.62 L100.0 207.62 L102.5 204.62 L105.0 207.62 L107.5 204.62 L110.0 207.62 L112.5 204.62 L115.0 207.62 L117.5 204.62 L120.0 207.62 L122.5 204.62 L125.0 207.62 L127.5 204.62 L130.0 207.62 L132.5 204.62 L135.0 207.62 L137.5 204.62 L140.0 207.62 L142.5 204.62 L145.0 207.62 L147.5 204.62 L150.0 207.62 L152.5 204.62 L155.0 207.62 L157.5 204.62 L160.0 207.62 L162.5 204.62 L165.0 207.62 L167.5 204.62 L170.0 207.62 L172.5 204.62 L175.0 207.62 L177.5 204.62 L180.0 207.62 L182.5 204.62 L185.0 207.62 L187.5 204.62 L190.0 207.62 L192.5 204.62 L195.0 207.62 L197.5 204.62 L200.0 207.62 L202.5 204.62 L205.0 207.62 L207.5 204.62 L210.0 207.62 L212.5 204.62 L215.0 207.62 L217.5 204.62 L220.0 207.62 L222.5 204.62 L225.0 207.62 L227.5 204.62 L230.0 207.62 L232.5 204.62 L235.0 207.62 L237.5 204.62 L240.0 207.62 L242.5 204.62 L245.0 207.62 L247.5 204.62 L250.0 207.62 L252.5 204.62 L255.0 207.62 L257.5 204.62 L260.0 207.62 L262.5 204.62 L265.0 207.62 L267.5 204.62 L270.0 207.62 L272.5 204.62 L275.0 207.62 L277.5 204.62 L280.0 207.62 L282.5 204.62 L285.0 207.62 L287.5 204.62 L290.0 207.62 L292.5 204.62 L295.0 207.62 L297.5 204.62 L300.0 207.62 L302.5 204.62 L305.0 207.62 L307.5 204.62 L310.0 207.62 L312.5 204.62 L315.0 207.62 L317.5 204.62 L320.0 207.62 L322.5 204.62 L325.0 207.62 L327.5 204.62 L330.0 207.62 L332.5 204.62 L335.0 207.62 L337.5 204.62 L340.0 207.62 L342.5 204.62 L345.0 207.62 L347.5 204.62 L350.0 207.62 L352.5 204.62 L355.0 207.62 L357.5 204.62 L360.0 207.62 L362.5 204.62 L365.0 207.62 L367.5 204.62 L370.0 207.62 L372.5 204.62 L375.0 207.62 L377.5 204.62 L380.0 207.62 L382.5 204.62 L385.0 207.62 L387.5 204.62 L390.0 207.62 L392.5 204.62 L395.0 207.62 L397.5 204.62 L400.0 207.62 L402.5 204.62 L405.0 207.62 L407.5 204.62 L410.0 207.62 L412.5 204.62 L415.0 207.62 L417.5 204.62 L420.0 207.62 L422.5 204.62 L425.0 207.62 L427.5 204.62 L430.0 207.62 L432.5 204.62 L435.0 207.62 M75 264.08 L77.5 261.08 L80.0 264.08 L82.5 261.08 L85.0 264.08 L87.5 261.08 L90.0 264.08 L92.5 261.08 L95.0 264.08 L97.5 261.08 L100.0 264.08 L102.5 261.08 L105.0 264.08 L107.5 261.08 L110.0 264.08 L112.5 261.08 L115.0 264.08 L117.5 261.08 L120.0 264.08 L122.5 261.08 L125.0 264.08 L127.5 261.08 L130.0 264.08 L132.5 261.08 L135.0 264.08 L137.5 261.08 L140.0 264.08 L142.5 261.08 L145.0 264.08 L147.5 261.08 L150.0 264.08 L152.5 261.08 L155.0 264.08 L157.5 261.08 L160.0 264.08 L162.5 261.08 L165.0 264.08 L167.5 261.08 L170.0 264.08 L172.5 261.08 L175.0 264.08 L177.5 261.08 L180.0 264.08 L182.5 261.08 L185.0 264.08 L187.5 261.08 L190.0 264.08 L192.5 261.08 L195.0 264.08 L197.5 261.08 L200.0 264.08 L202.5 261.08 L205.0 264.08 L207.5 261.08 L210.0 264.08 L212.5 261.08 L215.0 264.08 L217.5 261.08 L220.0 264.08 L222.5 261.08 L225.0 264.08 L227.5 261.08 L230.0 264.08 L232.5 261.08 L235.0 264.08 L237.5 261.08 L240.0 264.08 L242.5 261.08 L245.0 264.08 L247.5 261.08 L250.0 264.08 L252.5 261.08 L255.0 264.08 L257.5 261.08 L260.0 264.08 L262.5 261.08 L265.0 264.08 L267.5 261.08 L270.0 264.08 L272.5 261.08 L275.0 264.08 L277.5 261.08 L280.0 264.08 L282.5 261.08 L285.0 264.08 L287.5 261.08 L290.0 264.08 L292.5 261.08 L295.0 264.08 M75 508.74 L77.5 505.74 L80.0 508.74 L82.5 505.74 L85.0 508.74 L87.5 505.74 L90.0 508.74 L92.5 505.74 L95.0 508.74 L97.5 505.74 L100.0 508.74 L102.5 505.74 L105.0 508.74 L107.5 505.74 L110.0 508.74 L112.5 505.74 L115.0 508.74 L117.5 505.74 L120.0 508.74 L122.5 505.74 L125.0 508.74 L127.5 505.74 L130.0 508.74 L132.5 505.74 L135.0 508.74 L137.5 505.74 L140.0 508.74 L142.5 505.74 L145.0 508.74 L147.5 505.74 L150.0 508.74 L152.5 505.74 L155.0 508.74 L157.5 505.74 L160.0 508.74 L162.5 505.74 L165.0 508.74 L167.5 505.74 L170.0 508.74 L172.5 505.74 L175.0 508.74 L177.5 505.74 L180.0 508.74 L182.5 505.74 L185.0 508.74 L187.5 505.74 L190.0 508.74 L192.5 505.74 L195.0 508.74 L197.5 505.74 L200.0 508.74 L202.5 505.74 L205.0 508.74 L207.5 505.74 L210.0 508.74 L212.5 505.74 L215.0 508.74 L217.5 505.74 L220.0 508.74 L222.5 505.74 L225.0 508.74 L227.5 505.74 L230.0 508.74 L232.5 505.74 L235.0 508.74 L237.5 505.74 L240.0 508.74 L242.5 505.74 L245.0 508.74 L247.5 505.74 L250.0 508.74 L252.5 505.74 L255.0 508.74 L257.5 505.74 L260.0 508.74 L262.5 505.74 L265.0 508.74 L267.5 505.74 L270.0 508.74 L272.5 505.74 L275.0 508.74 L277.5 505.74 L280.0 508.74 L282.5 505.74 L285.0 508.74 L287.5 505.74 L290.0 508.74 L292.5 505.74 L295.0 508.74 L297.5 505.74 L300.0 508.74 L302.5 505.74 L305.0 508.74 L307.5 505.74 L310.0 508.74 L312.5 505.74 L315.0 508.74 L317.5 505.74 L320.0 508.74 L322.5 505.74 L325.0 508.74 L327.5 505.74 L330.0 508.74 L332.5 505.74 L335.0 508.74 L337.5 505.74 L340.0 508.74 L342.5 505.74 L345.0 508.74 M75 621.66 L77.5 618.66 L80.0 621.66 L82.5 618.66 L85.0 621.66 L87.5 618.66 L90.0 621.66 L92.5 618.66 L95.0 621.66 L97.5 618.66 L100.0 621.66 L102.5 618.66 L105.0 621.66 L107.5 618.66 L110.0 621.66 L112.5 618.66 L115.0 621.66 L117.5 618.66 L120.0 621.66 L122.5 618.66 L125.0 621.66 L127.5 618.66 L130.0 621.66 L132.5 618.66 L135.0 621.66 L137.5 618.66 L140.0 621.66 L142.5 618.66 L145.0 621.66 L147.5 618.66 L150.0 621.66 L152.5 618.66 L155.0 621.66 L157.5 618.66 L160.0 621.66 L162.5 618.66 L165.0 621.66 L167.5 618.66 L170.0 621.66 L172.5 618.66 L175.0 621.66 L177.5 618.66 L180.0 621.66 L182.5 618.66 L185.0 621.66 L187.5 618.66 L190.0 621.66 L192.5 618.66 L195.0 621.66 L197.5 618.66 L200.0 621.66 L202.5 618.66 L205.0 621.66 L207.5 618.66 L210.0 621.66 L212.5 618.66 L215.0 621.66 M105 678.12 L107.5 675.12 L110.0 678.12 L112.5 675.12 L115.0 678.12 L117.5 675.12 L120.0 678.12 L122.5 675.12 L125.0 678.12 L127.5 675.12 L130.0 678.12 L132.5 675.12 L135.0 678.12 L137.5 675.12 L140.0 678.12 L142.5 675.12 L145.0 678.12 L147.5 675.12 L150.0 678.12 L152.5 675.12 L155.0 678.12 L157.5 675.12 L160.0 678.12 L162.5 675.12 L165.0 678.12" stroke="#4caa4c" stroke-width="1.1" fill="none"/><path d="M25 433.46 L27.5 430.46 L30.0 433.46 L32.5 430.46 L35.0 433.46 L37.5 430.46 L40.0 433.46 L42.5 430.46 L45.0 433.46 L47.5 430.46 L50.0 433.46 L52.5 430.46 L55.0 433.46 L57.5 430.46 L60.0 433.46 L62.5 430.46 L65.0 433.46 L67.5 430.46 L70.0 433.46 L72.5 430.46 L75.0 433.46 L77.5 430.46 L80.0 433.46 L82.5 430.46 L85.0 433.46 L87.5 430.46 L90.0 433.46 L92.5 430.46 L95.0 433.46 L97.5 430.46 L100.0 433.46 L102.5 430.46 L105.0 433.46 L107.5 430.46 L110.0 433.46 L112.5 430.46 L115.0 433.46 M105 452.28 L107.5 449.28 L110.0 452.28 L112.5 449.28 L115.0 452.28 L117.5 449.28 L120.0 452.28 L122.5 449.28 L125.0 452.28 L127.5 449.28 L130.0 452.28 L132.5 449.28 L135.0 452.28 L137.5 449.28 L140.0 452.28 L142.5 449.28 L145.0 452.28 L147.5 449.28 L150.0 452.28 L152.5 449.28 L155.0 452.28 L157.5 449.28 L160.0 452.28 L162.5 449.28 L165.0 452.28 L167.5 449.28 L170.0 452.28 L172.5 449.28 L175.0 452.28 L177.5 449.28 L180.0 452.28 L182.5 449.28 L185.0 452.28 L187.5 449.28 L190.0 452.28 L192.5 449.28 L195.0 452.28" stroke="#e04848" stroke-width="1.1" fill="none"/></svg><pre>NLCD Land Cover Classification System Key

Water
     11 Open Water
     12 Perennial Ice/Snow

Developed
     21 Low Intensity Residential
     22 High Intensity Residential
     23 Commercial/Industrial/Transportation

Barren
     31 Bare Rock/Sand/Clay
     32 Quarries/Strip Mines/Gravel Pits
     33 Transitional

Forested Upland
     41 Deciduous Forest
     42 Evergreen Forest
     43 Mixed Forest

Shrubland
     51 Shrubland

Non-natural Woody
     61 Orchards/Vineyards/Other

Herbaceous Upland
     71 Grasslands/Herbaceous

Herbaceous Planted/Cultivated
     81 Pasture/Hay
     82 Row Crops
     83 Small Grains
     84 Fallow
     85 Urban/Recreational Grasses
</pre>
</div>

</body></html>
